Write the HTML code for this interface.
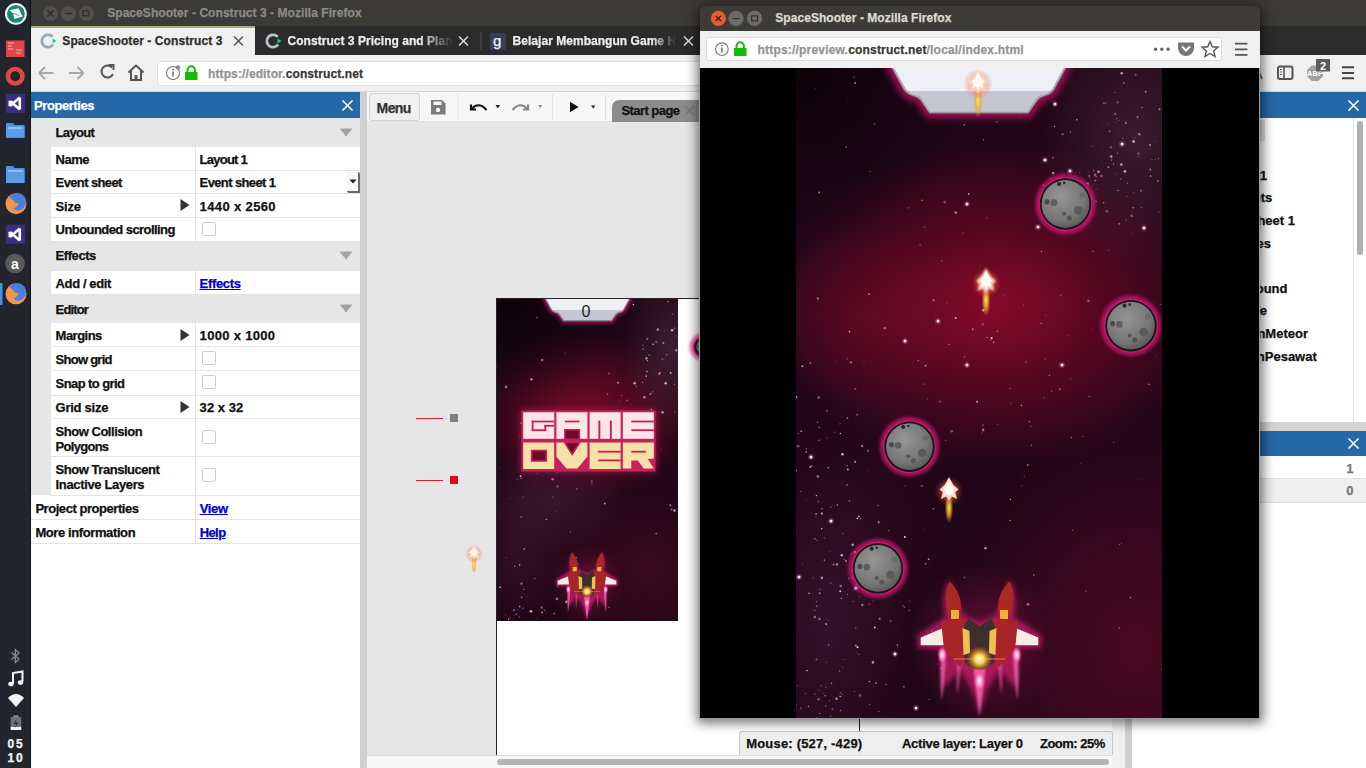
<!DOCTYPE html>
<html><head><meta charset="utf-8">
<style>
*{margin:0;padding:0;box-sizing:border-box}
html,body{width:1366px;height:768px;overflow:hidden;background:#e6e6e6;font-family:"Liberation Sans",sans-serif}
.a{position:absolute}
.t{font-weight:bold;white-space:pre;line-height:normal;-webkit-text-stroke:0.25px currentColor}
</style></head><body>
<div class="a" style="left:0px;top:0px;width:30px;height:768px;background:#22252e;"></div><div class="a" style="left:30px;top:0px;width:1px;height:768px;background:#101114;"></div><svg class="a" style="left:0;top:0" width="31" height="320">
<circle cx="15.9" cy="13.9" r="9.9" fill="#13877a" stroke="#f2f8f8" stroke-width="2"/>
<path d="M9.5 10.3 L18.6 8.3 L22.6 16.5 L14.5 19 L13 13.5 Z" fill="#f4fbfb"/>
<path d="M13 13.3 L19 15.5" stroke="#2a6a60" stroke-width="0.7"/>
<rect x="6" y="40.5" width="18.5" height="16.5" fill="#e04646"/>
<path d="M8 43h6M8 46h4M8 49h5M16 50h6M16 53h5" stroke="#f4b0b0" stroke-width="1"/>
<circle cx="15.2" cy="76.2" r="7.3" fill="none" stroke="#e2493c" stroke-width="4.5"/>
<rect x="6" y="93.8" width="19" height="19" fill="#3a2c88"/>
<path d="M19.8 97.5 V109.5 M19.8 97.5 L10 106 M19.8 109.5 L10 101 M9.8 100.8 V106.2" stroke="#fff" stroke-width="2.6" fill="none" stroke-linejoin="round"/>
<path d="M6 123 h7 l1.5 2 h10 v12.7 h-18.5 z" fill="#4f8ee0"/>
<rect x="6" y="126" width="18.5" height="11.7" fill="#5a9bea"/>
<path d="M8 128h14.5" stroke="#cfe0f7" stroke-width="1"/>
<path d="M6 166 h7 l1.5 2 h10 v15 h-18.5 z" fill="#4f8ee0"/>
<rect x="6" y="169" width="18.5" height="14" fill="#5a9bea"/>
<path d="M8 171h14.5" stroke="#cfe0f7" stroke-width="1"/>
<circle cx="16" cy="203.7" r="10.5" fill="#f0954a"/>
<path d="M9 196.5 Q14 192.5 20 193.5 Q26.5 196 26 203 Q25 209 19 210.5 Q15 211 13.5 208 Q18 207 19 203 Q15 204 13 200 Q11 198 9 196.5 Z" fill="#4a7ee0"/>
<rect x="6" y="224.8" width="19" height="19" fill="#3a2c88"/>
<path d="M19.8 228.5 V240.5 M19.8 228.5 L10 237 M19.8 240.5 L10 232 M9.8 231.8 V237.2" stroke="#fff" stroke-width="2.6" fill="none" stroke-linejoin="round"/>
<circle cx="15" cy="263.5" r="9.8" fill="#5a5a5a"/>
<text x="15" y="268.5" font-family="Liberation Sans" font-weight="bold" font-size="14" fill="#fff" text-anchor="middle">a</text>
<rect x="0" y="283" width="2.5" height="22" fill="#4c8fe8"/>
<circle cx="16" cy="293.8" r="10.5" fill="#f0954a"/>
<path d="M9 286.6 Q14 282.6 20 283.6 Q26.5 286.1 26 293.1 Q25 299.1 19 300.6 Q15 301.1 13.5 298.1 Q18 297.1 19 293.1 Q15 294.1 13 290.1 Q11 288.1 9 286.6 Z" fill="#4a7ee0"/>
</svg><svg class="a" style="left:0;top:640px" width="31" height="128">
<path d="M11.5 12.5 L19 19 L15.3 22.5 L15.3 9.5 L19 13 L11.5 19.5" stroke="#8a8d96" stroke-width="1.3" fill="none"/>
<path d="M13 43.5 V33 L22.5 31.5 V41.5" stroke="#f4f4f4" stroke-width="2" fill="none"/>
<ellipse cx="11" cy="44" rx="2.7" ry="2.3" fill="#f4f4f4"/>
<ellipse cx="20.5" cy="42.5" rx="2.7" ry="2.3" fill="#f4f4f4"/>
<path d="M8 58 Q16 50 24 58 L16 67 Z" fill="#f4f4f4"/>
<rect x="13.5" y="75.5" width="5" height="2" fill="#9a9da5"/>
<rect x="10.7" y="77" width="10.5" height="13" fill="#6f727a"/>
<rect x="10.7" y="87" width="10.5" height="3" fill="#f4f4f4"/>
<path d="M16.5 79 L13.5 84 H16 L15 88 L18.5 82.5 H16 Z" fill="#2a2d35"/>
</svg><div class="a t" style="left:7.60px;top:737.44px;font-size:12px;color:#f4f4f4;letter-spacing:1.841px;">05</div><div class="a t" style="left:7.60px;top:751.14px;font-size:12px;color:#f4f4f4;letter-spacing:1.841px;">10</div><div class="a" style="left:31px;top:0px;width:1335px;height:26px;background:#3b3a36;"></div><div class="a" style="left:31px;top:26px;width:1335px;height:29px;background:#2b2b2b;"></div><div class="a" style="left:31px;top:26px;width:224px;height:2px;background:#9fb27f;"></div><div class="a" style="left:31px;top:28px;width:224px;height:27px;background:#f0f0f0;"></div><div class="a" style="left:31px;top:55px;width:1335px;height:37px;background:#f0f0f0;"></div><div class="a" style="left:31px;top:91px;width:1335px;height:1px;background:#d6d6d6;"></div><div class="a" style="left:42.9px;top:5.8px;width:15px;height:15px;border-radius:50%;background:#514f4a"></div><div class="a" style="left:60.900000000000006px;top:5.8px;width:15px;height:15px;border-radius:50%;background:#514f4a"></div><div class="a" style="left:78.8px;top:5.8px;width:15px;height:15px;border-radius:50%;background:#514f4a"></div><svg class="a" style="left:31px;top:0" width="80" height="26">
<path d="M16.5 10.5 L22.5 16.5 M22.5 10.5 L16.5 16.5" stroke="#2b2a27" stroke-width="1.2"/>
<path d="M34 13.5 H41" stroke="#2b2a27" stroke-width="1.3"/>
<rect x="51.8" y="10.8" width="6" height="5" fill="none" stroke="#2b2a27" stroke-width="1.1"/>
</svg><div class="a t" style="left:107.20px;top:5.94px;font-size:12px;color:#8b8a85;letter-spacing:0.057px;">SpaceShooter - Construct 3 - Mozilla Firefox</div><svg class="a" style="left:31px;top:28px" width="700" height="27">
<circle cx="17" cy="13" r="6.2" fill="none" stroke="#9aa6b0" stroke-width="2.8" stroke-dasharray="30 9" transform="rotate(35 17 13)"/>
<path d="M21.5 10.5 L25.5 13 L21.5 15.5 Z" fill="#2ec4a0"/>
<path d="M203 8.5 L212 17.5 M212 8.5 L203 17.5" stroke="#555" stroke-width="1.5"/>
<circle cx="242" cy="13" r="6.2" fill="none" stroke="#b8c0c8" stroke-width="2.8" stroke-dasharray="30 9" transform="rotate(35 242 13)"/>
<path d="M246.5 10.5 L250.5 13 L246.5 15.5 Z" fill="#2ec4a0"/>
<path d="M428 8.5 L437 17.5 M437 8.5 L428 17.5" stroke="#ddd" stroke-width="1.5"/>
<rect x="449.5" y="4" width="1" height="18" fill="#555"/>
<rect x="459" y="5" width="16" height="17" fill="#34405a"/>
<path d="M653 8.5 L662 17.5 M662 8.5 L653 17.5" stroke="#ddd" stroke-width="1.5"/>
</svg><div class="a t" style="left:62.30px;top:33.84px;font-size:12px;color:#2d2d2d;letter-spacing:0.079px;">SpaceShooter - Construct 3</div><div class="a t" style="left:287.50px;top:33.84px;font-size:12px;color:#ececec;letter-spacing:0.036px;-webkit-mask-image:linear-gradient(90deg,#000 80%,transparent 100%)">Construct 3 Pricing and Plan</div><div class="a t" style="left:493.00px;top:31.92px;font-size:15px;color:#f4f4f4;font-weight:normal;">g</div><div class="a t" style="left:512.60px;top:33.84px;font-size:12px;color:#ececec;letter-spacing:0.034px;-webkit-mask-image:linear-gradient(90deg,#000 85%,transparent 100%)">Belajar Membangun Game H</div><svg class="a" style="left:31px;top:55px" width="130" height="37">
<path d="M8 18 H22.5 M8 18 L14 12 M8 18 L14 24" stroke="#a8a8a8" stroke-width="1.8" fill="none"/>
<path d="M38 18 H52.5 M52.5 18 L46.5 12 M52.5 18 L46.5 24" stroke="#a8a8a8" stroke-width="1.8" fill="none"/>
<path d="M81 12.5 A6 6 0 1 0 82 19" stroke="#555" stroke-width="2" fill="none"/>
<path d="M77.5 10 H82.5 V15" stroke="#555" stroke-width="2" fill="none"/>
<path d="M97.5 17.5 L105 10.5 L112.5 17.5 M100 16 V25 H110 V16" stroke="#555" stroke-width="2" fill="none"/>
<rect x="103.5" y="20" width="3" height="5" fill="#555"/>
</svg><div class="a" style="left:157px;top:60.5px;width:1090px;height:25px;background:#fff;border:1px solid #dedede;border-radius:4px"></div><svg class="a" style="left:157px;top:60px" width="50" height="26">
<circle cx="16" cy="13" r="6.5" fill="none" stroke="#777" stroke-width="1.1"/>
<rect x="15.2" y="11.5" width="1.6" height="5" fill="#777"/><rect x="15.2" y="8.7" width="1.6" height="1.6" fill="#777"/>
<circle cx="21" cy="7.5" r="2.2" fill="#888"/>
<path d="M30.5 12 V10 A3.7 3.7 0 0 1 37.9 10 V12" stroke="#12bc00" stroke-width="2" fill="none"/>
<rect x="28" y="12" width="12.5" height="8" fill="#12bc00"/>
</svg><div class="a t" style="left:208.00px;top:66.84px;font-size:12px;color:#939393;letter-spacing:0.111px;">https://editor.<span style="color:#363636">construct.net</span></div><svg class="a" style="left:1248px;top:64px" width="20" height="18"><path d="M2 15 L8 1.5 L14 15 M4.5 10 H11.5" stroke="#666" stroke-width="1.8" fill="none"/></svg><svg class="a" style="left:1255px;top:55px" width="111" height="37">
<rect x="23" y="11.5" width="14.5" height="12.5" rx="2" fill="none" stroke="#555" stroke-width="2"/>
<path d="M29 11.5 V24" stroke="#555" stroke-width="1.6"/>
<path d="M25 14.5 h2 M25 17 h2 M25 19.5 h2" stroke="#555" stroke-width="1"/>
<path d="M56.8 10.4 h6.4 l4.6 4.6 v6.4 l-4.6 4.6 h-6.4 l-4.6 -4.6 v-6.4 z" fill="#a0a0a0"/>
<text x="60" y="21" font-family="Liberation Sans" font-size="7.5" font-weight="bold" fill="#fff" text-anchor="middle">ABP</text>
<rect x="61" y="4" width="14" height="12.5" fill="#5c5c5c"/>
<text x="68" y="14.5" font-family="Liberation Sans" font-size="11" font-weight="bold" fill="#fff" text-anchor="middle">2</text>
<path d="M87 12.3 h12 M87 18 h12 M87 23.2 h12" stroke="#444" stroke-width="2"/>
</svg><div class="a" style="left:31px;top:92px;width:329px;height:676px;background:#fff;"></div><div class="a" style="left:31px;top:92px;width:329px;height:26px;background:#2568a8;"></div><div class="a t" style="left:34.00px;top:98.23px;font-size:13px;color:#fff;letter-spacing:-0.424px;">Properties</div><svg class="a" style="left:340px;top:98px" width="16" height="16"><path d="M2.5 2.5 L12.5 12.5 M12.5 2.5 L2.5 12.5" stroke="#fff" stroke-width="1.6"/></svg><div class="a" style="left:31px;top:118px;width:20px;height:377px;background:#e6e6e6;"></div><div class="a" style="left:51px;top:118px;width:309px;height:29px;background:#e6e6e6;"></div><div class="a t" style="left:55.60px;top:125.34px;font-size:13px;color:#111;letter-spacing:-0.665px;">Layout</div><svg class="a" style="left:339px;top:128.0px" width="14" height="9"><path d="M0.5 0.5 H13.5 L7 8.5 Z" fill="#a3a3a3"/></svg><div class="a" style="left:51px;top:147px;width:309px;height:23px;background:#fff;"></div><div class="a" style="left:195px;top:147px;width:1px;height:23px;background:#e4e4e4;"></div><div class="a t" style="left:55.60px;top:151.74px;font-size:13px;color:#111;letter-spacing:-0.541px;">Name</div><div class="a t" style="left:199.60px;top:151.74px;font-size:13px;color:#111;letter-spacing:-0.753px;">Layout 1</div><div class="a" style="left:51px;top:170px;width:309px;height:23px;background:#fff;"></div><div class="a" style="left:195px;top:170px;width:1px;height:23px;background:#e4e4e4;"></div><div class="a t" style="left:55.60px;top:175.24px;font-size:13px;color:#111;letter-spacing:-0.618px;">Event sheet</div><div class="a t" style="left:199.60px;top:175.24px;font-size:13px;color:#111;letter-spacing:-0.619px;">Event sheet 1</div><div class="a" style="left:347px;top:172px;width:13px;height:21px;background:#f7f7f7;border-right:2px solid #6a6a6a;border-bottom:2px solid #6a6a6a;border-radius:0 2px 0 2px"></div><svg class="a" style="left:349px;top:179px" width="8" height="5"><path d="M0.5 0.5 H7.5 L4 4.5 Z" fill="#222"/></svg><div class="a" style="left:51px;top:193px;width:309px;height:24px;background:#fff;"></div><div class="a" style="left:195px;top:193px;width:1px;height:24px;background:#e4e4e4;"></div><div class="a t" style="left:55.60px;top:198.63px;font-size:13px;color:#111;letter-spacing:-0.172px;">Size</div><div class="a t" style="left:199.60px;top:198.63px;font-size:13px;color:#111;letter-spacing:0.370px;">1440 x 2560</div><svg class="a" style="left:180px;top:199.3px" width="10" height="12"><path d="M0.5 0 L9.5 6 L0.5 12 Z" fill="#333"/></svg><div class="a" style="left:51px;top:217px;width:309px;height:24px;background:#fff;"></div><div class="a" style="left:195px;top:217px;width:1px;height:24px;background:#e4e4e4;"></div><div class="a t" style="left:55.60px;top:222.03px;font-size:13px;color:#111;letter-spacing:-0.567px;">Unbounded scrolling</div><div class="a" style="left:201.7px;top:221.5px;width:14px;height:14px;border:1px solid #cdcdcd;border-radius:2px;background:#fff"></div><div class="a" style="left:51px;top:240.7px;width:309px;height:29.900000000000034px;background:#e6e6e6;"></div><div class="a t" style="left:55.60px;top:248.33px;font-size:13px;color:#111;letter-spacing:-0.443px;">Effects</div><svg class="a" style="left:339px;top:251.15px" width="14" height="9"><path d="M0.5 0.5 H13.5 L7 8.5 Z" fill="#a3a3a3"/></svg><div class="a" style="left:51px;top:271px;width:309px;height:23px;background:#fff;"></div><div class="a" style="left:195px;top:271px;width:1px;height:23px;background:#e4e4e4;"></div><div class="a t" style="left:55.60px;top:275.74px;font-size:13px;color:#111;letter-spacing:-0.391px;">Add / edit</div><div class="a t" style="left:199.60px;top:275.74px;font-size:13px;color:#0000cc;letter-spacing:-0.343px;text-decoration:underline">Effects</div><div class="a" style="left:51px;top:294.3px;width:309px;height:28.69999999999999px;background:#e6e6e6;"></div><div class="a t" style="left:55.60px;top:301.83px;font-size:13px;color:#111;letter-spacing:-0.853px;">Editor</div><svg class="a" style="left:339px;top:304.15px" width="14" height="9"><path d="M0.5 0.5 H13.5 L7 8.5 Z" fill="#a3a3a3"/></svg><div class="a" style="left:51px;top:323px;width:309px;height:23px;background:#fff;"></div><div class="a" style="left:195px;top:323px;width:1px;height:23px;background:#e4e4e4;"></div><div class="a t" style="left:55.60px;top:327.94px;font-size:13px;color:#111;letter-spacing:-0.524px;">Margins</div><div class="a t" style="left:199.60px;top:327.94px;font-size:13px;color:#111;letter-spacing:0.320px;">1000 x 1000</div><svg class="a" style="left:180px;top:328.7px" width="10" height="12"><path d="M0.5 0 L9.5 6 L0.5 12 Z" fill="#333"/></svg><div class="a" style="left:51px;top:346px;width:309px;height:24px;background:#fff;"></div><div class="a" style="left:195px;top:346px;width:1px;height:24px;background:#e4e4e4;"></div><div class="a t" style="left:55.60px;top:352.24px;font-size:13px;color:#111;letter-spacing:-0.743px;">Show grid</div><div class="a" style="left:201.7px;top:350.9px;width:14px;height:14px;border:1px solid #cdcdcd;border-radius:2px;background:#fff"></div><div class="a" style="left:51px;top:370px;width:309px;height:25px;background:#fff;"></div><div class="a" style="left:195px;top:370px;width:1px;height:25px;background:#e4e4e4;"></div><div class="a t" style="left:55.60px;top:376.44px;font-size:13px;color:#111;letter-spacing:-0.586px;">Snap to grid</div><div class="a" style="left:201.7px;top:375.1px;width:14px;height:14px;border:1px solid #cdcdcd;border-radius:2px;background:#fff"></div><div class="a" style="left:51px;top:395px;width:309px;height:23px;background:#fff;"></div><div class="a" style="left:195px;top:395px;width:1px;height:23px;background:#e4e4e4;"></div><div class="a t" style="left:55.60px;top:399.94px;font-size:13px;color:#111;letter-spacing:-0.265px;">Grid size</div><div class="a t" style="left:199.60px;top:399.94px;font-size:13px;color:#111;letter-spacing:0.054px;">32 x 32</div><svg class="a" style="left:180px;top:400.65px" width="10" height="12"><path d="M0.5 0 L9.5 6 L0.5 12 Z" fill="#333"/></svg><div class="a" style="left:51px;top:418px;width:309px;height:38px;background:#fff;"></div><div class="a" style="left:195px;top:418px;width:1px;height:38px;background:#e4e4e4;"></div><div class="a t" style="left:55.60px;top:423.74px;font-size:13px;color:#111;letter-spacing:-0.475px;">Show Collision</div><div class="a t" style="left:55.60px;top:438.94px;font-size:13px;color:#111;letter-spacing:-0.717px;">Polygons</div><div class="a" style="left:201.7px;top:429.5px;width:14px;height:14px;border:1px solid #cdcdcd;border-radius:2px;background:#fff"></div><div class="a" style="left:51px;top:456px;width:309px;height:39px;background:#fff;"></div><div class="a" style="left:195px;top:456px;width:1px;height:39px;background:#e4e4e4;"></div><div class="a t" style="left:55.60px;top:461.63px;font-size:13px;color:#111;letter-spacing:-0.463px;">Show Translucent</div><div class="a t" style="left:55.60px;top:476.94px;font-size:13px;color:#111;letter-spacing:-0.354px;">Inactive Layers</div><div class="a" style="left:201.7px;top:468px;width:14px;height:14px;border:1px solid #cdcdcd;border-radius:2px;background:#fff"></div><div class="a" style="left:31px;top:495px;width:329px;height:24px;background:#fff;"></div><div class="a" style="left:195px;top:495px;width:1px;height:24px;background:#e4e4e4;"></div><div class="a t" style="left:35.40px;top:500.54px;font-size:13px;color:#111;letter-spacing:-0.451px;">Project properties</div><div class="a t" style="left:199.70px;top:500.54px;font-size:13px;color:#0000cc;letter-spacing:-0.330px;text-decoration:underline">View</div><div class="a" style="left:31px;top:519px;width:329px;height:24px;background:#fff;"></div><div class="a" style="left:195px;top:519px;width:1px;height:24px;background:#e4e4e4;"></div><div class="a t" style="left:35.40px;top:524.94px;font-size:13px;color:#111;letter-spacing:-0.398px;">More information</div><div class="a t" style="left:199.70px;top:524.94px;font-size:13px;color:#0000cc;letter-spacing:-0.591px;text-decoration:underline">Help</div><div class="a" style="left:51px;top:170px;width:309px;height:1px;background:#e4e4e4;"></div><div class="a" style="left:51px;top:193px;width:309px;height:1px;background:#e4e4e4;"></div><div class="a" style="left:51px;top:217px;width:309px;height:1px;background:#e4e4e4;"></div><div class="a" style="left:51px;top:241px;width:309px;height:1px;background:#e4e4e4;"></div><div class="a" style="left:51px;top:294px;width:309px;height:1px;background:#e4e4e4;"></div><div class="a" style="left:51px;top:346px;width:309px;height:1px;background:#e4e4e4;"></div><div class="a" style="left:51px;top:370px;width:309px;height:1px;background:#e4e4e4;"></div><div class="a" style="left:51px;top:395px;width:309px;height:1px;background:#e4e4e4;"></div><div class="a" style="left:51px;top:418px;width:309px;height:1px;background:#e4e4e4;"></div><div class="a" style="left:51px;top:456px;width:309px;height:1px;background:#e4e4e4;"></div><div class="a" style="left:51px;top:495px;width:309px;height:1px;background:#e4e4e4;"></div><div class="a" style="left:31px;top:519px;width:329px;height:1px;background:#e4e4e4;"></div><div class="a" style="left:31px;top:543px;width:329px;height:1px;background:#e4e4e4;"></div><div class="a" style="left:360px;top:92px;width:7px;height:676px;background:#cfcfcf;"></div><div class="a" style="left:367px;top:92px;width:758px;height:676px;background:#e6e6e6;"></div><div class="a" style="left:367px;top:92px;width:758px;height:30px;background:#f6f6f6;"></div><div class="a" style="left:367px;top:121px;width:758px;height:1px;background:#e0e0e0;"></div><div class="a" style="left:368.5px;top:93.3px;width:51px;height:27.5px;background:#f0f0f0;border:1px solid #d4d4d4;border-radius:3px"></div><div class="a t" style="left:376.60px;top:99.63px;font-size:14px;color:#333;letter-spacing:-0.621px;">Menu</div><svg class="a" style="left:367px;top:92px" width="260" height="30">
<path d="M64 8 H75 L78.5 11.5 V22.5 H64 Z" fill="#7a7a7a"/>
<rect x="66.5" y="9.5" width="8" height="3.5" fill="#f6f6f6"/>
<circle cx="71" cy="18" r="2.2" fill="#f6f6f6"/>
<rect x="90.5" y="2" width="1" height="26" fill="#e2e2e2"/>
<path d="M104 12.5 V17.5 H109" stroke="#111" stroke-width="2.2" fill="none"/>
<path d="M104.5 17 Q112 9 119.5 18" stroke="#111" stroke-width="2.2" fill="none"/>
<path d="M128.5 13 H133 L130.75 16.5 Z" fill="#222"/>
<path d="M161 12.5 V17.5 H156" stroke="#888" stroke-width="2.2" fill="none"/>
<path d="M160.5 17 Q153 9 145.5 18" stroke="#888" stroke-width="2.2" fill="none"/>
<path d="M171 13 H175.5 L173.25 16.5 Z" fill="#999"/>
<rect x="185" y="2" width="1" height="26" fill="#e2e2e2"/>
<path d="M203 9.7 L211.6 15 L203 20.3 Z" fill="#111"/>
<path d="M224 13.4 H228.4 L226.2 16.5 Z" fill="#222"/>
<rect x="238" y="2" width="1" height="26" fill="#e2e2e2"/>
</svg><div class="a" style="left:612px;top:99.8px;width:95px;height:22px;background:#8c8c8c;border-radius:7px 7px 0 0"></div><div class="a t" style="left:621.50px;top:103.03px;font-size:13px;color:#111;letter-spacing:-0.564px;">Start page</div><svg class="a" style="left:684px;top:105px" width="12" height="12"><path d="M1 1 L10 10 M10 1 L1 10" stroke="#777" stroke-width="1.5"/></svg><div class="a" style="left:496px;top:298px;width:680px;height:457px;background:#fff;"></div><div class="a" style="left:496px;top:298px;width:680px;height:1px;background:#222;"></div><div class="a" style="left:496px;top:298px;width:1px;height:457px;background:#222;"></div><div class="a" style="left:367px;top:755px;width:758px;height:13px;background:#f7f7f7;"></div><div class="a" style="left:367px;top:755px;width:758px;height:1px;background:#dadada;"></div><div class="a" style="left:497px;top:759px;width:612px;height:6px;background:#b4b4b4;border-radius:3px"></div><div class="a" style="left:1112px;top:122px;width:13px;height:646px;background:#f0f0f0;"></div><div class="a" style="left:1125px;top:92px;width:7px;height:676px;background:#cfcfcf;"></div><div class="a" style="left:416px;top:418px;width:27px;height:1px;background:#d22;"></div><div class="a" style="left:450px;top:414px;width:8px;height:8px;background:#808080;"></div><div class="a" style="left:416px;top:480px;width:27px;height:1px;background:#d22;"></div><div class="a" style="left:450px;top:476px;width:8px;height:8px;background:#e01010;"></div><div class="a" style="left:859px;top:718px;width:1px;height:37px;background:#222;"></div><div class="a" style="left:738.5px;top:731px;width:374px;height:24px;background:rgba(237,237,237,0.93);border:1px solid #c9c9c9;border-bottom:none;border-radius:3px 3px 0 0"></div><div class="a t" style="left:746.20px;top:735.84px;font-size:13px;color:#111;letter-spacing:0.194px;">Mouse: (527, -429)</div><div class="a t" style="left:902.00px;top:735.84px;font-size:13px;color:#111;letter-spacing:-0.273px;">Active layer: Layer 0</div><div class="a t" style="left:1040.00px;top:735.84px;font-size:13px;color:#111;letter-spacing:-0.505px;">Zoom: 25%</div><div class="a" style="left:1132px;top:92px;width:234px;height:676px;background:#fff;"></div><div class="a" style="left:1132px;top:92px;width:234px;height:26px;background:#2568a8;"></div><svg class="a" style="left:1346px;top:98px" width="16" height="16"><path d="M2.5 2.5 L12.5 12.5 M12.5 2.5 L2.5 12.5" stroke="#fff" stroke-width="1.6"/></svg><div class="a" style="left:1353px;top:118px;width:1px;height:304px;background:#e2e2e2;"></div><div class="a" style="left:1255px;top:120px;width:10px;height:21px;background:#e4e4e4;"></div><div class="a" style="left:1356.6px;top:120.7px;width:6.3px;height:134px;background:#b0b0b0;border-radius:3px"></div><div class="a t" style="left:1213.53px;top:167.63px;font-size:13px;color:#111;">Layout 1</div><div class="a t" style="left:1192.00px;top:190.24px;font-size:13px;color:#111;">Event sheets</div><div class="a t" style="left:1211.17px;top:212.54px;font-size:13px;color:#111;">Event sheet 1</div><div class="a t" style="left:1192.97px;top:236.04px;font-size:13px;color:#111;">Object types</div><div class="a t" style="left:1211.66px;top:281.24px;font-size:13px;color:#111;">Background</div><div class="a t" style="left:1230.16px;top:303.24px;font-size:13px;color:#111;">Sprite</div><div class="a t" style="left:1223.48px;top:326.13px;font-size:13px;color:#111;">SpawnMeteor</div><div class="a t" style="left:1222.86px;top:348.94px;font-size:13px;color:#111;">SpawnPesawat</div><div class="a" style="left:1132px;top:422px;width:234px;height:9px;background:#d4d4d4;"></div><div class="a" style="left:1132px;top:431px;width:234px;height:25px;background:#2568a8;"></div><svg class="a" style="left:1346px;top:436px" width="16" height="16"><path d="M2.5 2.5 L12.5 12.5 M12.5 2.5 L2.5 12.5" stroke="#fff" stroke-width="1.6"/></svg><div class="a" style="left:1132px;top:479px;width:234px;height:24px;background:#efefef;"></div><div class="a" style="left:1132px;top:478px;width:234px;height:1px;background:#e0e0e0;"></div><div class="a" style="left:1132px;top:502px;width:234px;height:1px;background:#e0e0e0;"></div><div class="a t" style="left:1346.27px;top:461.24px;font-size:13px;color:#777;">1</div><div class="a t" style="left:1346.27px;top:482.74px;font-size:13px;color:#777;">0</div><svg class="a" style="left:497px;top:299px" width="181" height="322"><defs><radialGradient id="erock" cx="40%" cy="35%" r="70%"><stop offset="0" stop-color="#959595"/><stop offset="0.7" stop-color="#767676"/><stop offset="1" stop-color="#565656"/></radialGradient><radialGradient id="eaglow"><stop offset="0.78" stop-color="#ff2a9a" stop-opacity="0.8"/><stop offset="1" stop-color="#ff2a9a" stop-opacity="0"/></radialGradient><radialGradient id="ebtail"><stop offset="0" stop-color="#f4f050"/><stop offset="0.5" stop-color="#f0b030" stop-opacity="0.75"/><stop offset="1" stop-color="#e08020" stop-opacity="0"/></radialGradient><radialGradient id="ebglow"><stop offset="0" stop-color="#ffa070" stop-opacity="0.9"/><stop offset="1" stop-color="#ff4030" stop-opacity="0"/></radialGradient><radialGradient id="eshipglow"><stop offset="0" stop-color="#ff2a8a" stop-opacity="0.3"/><stop offset="0.6" stop-color="#ff2a8a" stop-opacity="0.1"/><stop offset="1" stop-color="#ff2a8a" stop-opacity="0"/></radialGradient><radialGradient id="epinkglow"><stop offset="0" stop-color="#fff"/><stop offset="0.45" stop-color="#ff90c8"/><stop offset="1" stop-color="#ff2a8a" stop-opacity="0"/></radialGradient><radialGradient id="ecoreglow"><stop offset="0" stop-color="#ffffe8"/><stop offset="0.35" stop-color="#ffd848"/><stop offset="1" stop-color="#ff6020" stop-opacity="0"/></radialGradient><linearGradient id="ehudtop" x1="0" y1="0" x2="0" y2="1"><stop offset="0" stop-color="#eef0f6"/><stop offset="0.545" stop-color="#eef0f6"/><stop offset="0.545" stop-color="#c4c7d1"/><stop offset="1" stop-color="#c4c7d1"/></linearGradient><radialGradient id="eneb0" gradientUnits="userSpaceOnUse" cx="150" cy="270" r="130" gradientTransform="translate(150 270) scale(1 0.8461538461538461) translate(-150 -270)"><stop offset="0" stop-color="#4a0a22" stop-opacity="0.6"/><stop offset="0.55" stop-color="#4a0a22" stop-opacity="0.27"/><stop offset="1" stop-color="#4a0a22" stop-opacity="0"/></radialGradient><radialGradient id="eneb1" gradientUnits="userSpaceOnUse" cx="88" cy="118" r="115" gradientTransform="translate(88 118) scale(1 0.7391304347826086) translate(-88 -118)"><stop offset="0" stop-color="#9a0c32" stop-opacity="0.75"/><stop offset="0.55" stop-color="#9a0c32" stop-opacity="0.3375"/><stop offset="1" stop-color="#9a0c32" stop-opacity="0"/></radialGradient><radialGradient id="eneb2" gradientUnits="userSpaceOnUse" cx="175" cy="50" r="50" gradientTransform="translate(175 50) scale(1 1.8) translate(-175 -50)"><stop offset="0" stop-color="#705060" stop-opacity="0.35"/><stop offset="0.55" stop-color="#705060" stop-opacity="0.1575"/><stop offset="1" stop-color="#705060" stop-opacity="0"/></radialGradient><radialGradient id="eneb3" gradientUnits="userSpaceOnUse" cx="20" cy="250" r="50" gradientTransform="translate(20 250) scale(1 1.6) translate(-20 -250)"><stop offset="0" stop-color="#5a2048" stop-opacity="0.35"/><stop offset="0.55" stop-color="#5a2048" stop-opacity="0.1575"/><stop offset="1" stop-color="#5a2048" stop-opacity="0"/></radialGradient><radialGradient id="eneb4" gradientUnits="userSpaceOnUse" cx="55" cy="200" r="70" gradientTransform="translate(55 200) scale(1 0.7857142857142857) translate(-55 -200)"><stop offset="0" stop-color="#6a3060" stop-opacity="0.35"/><stop offset="0.55" stop-color="#6a3060" stop-opacity="0.1575"/><stop offset="1" stop-color="#6a3060" stop-opacity="0"/></radialGradient><radialGradient id="eneb5" gradientUnits="userSpaceOnUse" cx="0" cy="0" r="130" gradientTransform="translate(0 0) scale(1 0.8461538461538461) translate(0 0)"><stop offset="0" stop-color="#060103" stop-opacity="0.7"/><stop offset="0.55" stop-color="#060103" stop-opacity="0.315"/><stop offset="1" stop-color="#060103" stop-opacity="0"/></radialGradient></defs><rect width="181" height="322" fill="#1e0614"/><rect width="181" height="322" fill="url(#eneb0)"/><rect width="181" height="322" fill="url(#eneb1)"/><rect width="181" height="322" fill="url(#eneb2)"/><rect width="181" height="322" fill="url(#eneb3)"/><rect width="181" height="322" fill="url(#eneb4)"/><rect width="181" height="322" fill="url(#eneb5)"/><circle cx="72.5" cy="296.4" r="0.8" fill="#ff80d0" opacity="0.58"/><circle cx="55.7" cy="180.3" r="1.3" fill="#ff80d0" opacity="0.65"/><circle cx="174.6" cy="210.6" r="1.0" fill="#ff80d0" opacity="0.66"/><circle cx="47.5" cy="311.0" r="0.6" fill="#ffd0f0" opacity="0.63"/><circle cx="59.9" cy="299.9" r="1.3" fill="#ffffff" opacity="0.46"/><circle cx="42.7" cy="148.9" r="1.0" fill="#ffffff" opacity="0.85"/><circle cx="21.2" cy="180.1" r="0.5" fill="#ffffff" opacity="0.34"/><circle cx="0.1" cy="67.5" r="0.5" fill="#ff80d0" opacity="0.56"/><circle cx="160.9" cy="30.6" r="1.3" fill="#ffffff" opacity="0.45"/><circle cx="149.2" cy="77.1" r="0.8" fill="#ffffff" opacity="0.74"/><circle cx="137.7" cy="84.2" r="1.3" fill="#ffd0f0" opacity="0.72"/><circle cx="134.0" cy="105.2" r="0.5" fill="#ff80d0" opacity="0.45"/><circle cx="173.7" cy="74.0" r="1.0" fill="#ffffff" opacity="0.65"/><circle cx="153.5" cy="95.0" r="1.0" fill="#ffd0f0" opacity="0.48"/><circle cx="11.6" cy="320.2" r="0.6" fill="#ffd0f0" opacity="0.83"/><circle cx="24.6" cy="124.3" r="1.3" fill="#ffffff" opacity="0.38"/><circle cx="45.2" cy="61.1" r="1.3" fill="#ff80d0" opacity="0.65"/><circle cx="90.1" cy="147.1" r="0.8" fill="#ffffff" opacity="0.33"/><circle cx="22.3" cy="317.9" r="0.7" fill="#ff80d0" opacity="0.53"/><circle cx="121.1" cy="83.8" r="1.0" fill="#ffd0f0" opacity="0.64"/><circle cx="150.0" cy="72.4" r="0.8" fill="#ffffff" opacity="0.55"/><circle cx="2.3" cy="287.8" r="0.6" fill="#ffffff" opacity="0.35"/><circle cx="177.5" cy="211.5" r="1.3" fill="#ffffff" opacity="0.59"/><circle cx="156.1" cy="45.2" r="0.7" fill="#ffffff" opacity="0.83"/><circle cx="145.9" cy="46.3" r="0.7" fill="#ffffff" opacity="0.38"/><circle cx="33.9" cy="312.2" r="1.3" fill="#ffffff" opacity="0.71"/><circle cx="165.6" cy="113.3" r="1.3" fill="#ffffff" opacity="0.56"/><circle cx="75.5" cy="254.6" r="0.8" fill="#ff80d0" opacity="0.62"/><circle cx="24.3" cy="153.0" r="0.5" fill="#ffffff" opacity="0.35"/><circle cx="159.2" cy="234.5" r="0.8" fill="#ff80d0" opacity="0.81"/><circle cx="23.6" cy="177.3" r="1.0" fill="#ffffff" opacity="0.71"/><circle cx="159.2" cy="43.0" r="1.3" fill="#ff80d0" opacity="0.36"/><circle cx="59.8" cy="173.8" r="0.7" fill="#ff80d0" opacity="0.38"/><circle cx="150.4" cy="61.7" r="0.8" fill="#ffffff" opacity="0.57"/><circle cx="26.8" cy="290.3" r="0.6" fill="#ffd0f0" opacity="0.78"/><circle cx="22.7" cy="266.0" r="0.7" fill="#ffffff" opacity="0.76"/><circle cx="24.3" cy="218.0" r="0.8" fill="#ffffff" opacity="0.45"/><circle cx="69.2" cy="167.4" r="1.3" fill="#ff80d0" opacity="0.47"/><circle cx="175.7" cy="15.1" r="1.0" fill="#ff80d0" opacity="0.32"/><circle cx="139.3" cy="87.3" r="0.7" fill="#ffffff" opacity="0.43"/><circle cx="178.1" cy="37.1" r="0.5" fill="#ff80d0" opacity="0.65"/><circle cx="49.3" cy="220.4" r="0.6" fill="#ffd0f0" opacity="0.75"/><circle cx="147.4" cy="98.2" r="1.3" fill="#ff80d0" opacity="0.82"/><circle cx="122.2" cy="102.0" r="0.6" fill="#ff80d0" opacity="0.35"/><circle cx="19.7" cy="180.1" r="0.5" fill="#ff80d0" opacity="0.51"/><circle cx="60.9" cy="287.0" r="0.8" fill="#ffffff" opacity="0.48"/><circle cx="177.4" cy="113.1" r="0.5" fill="#ff80d0" opacity="0.84"/><circle cx="168.7" cy="84.3" r="1.3" fill="#ffd0f0" opacity="0.77"/><circle cx="152.3" cy="56.1" r="0.7" fill="#ffffff" opacity="0.57"/><circle cx="166.4" cy="44.0" r="1.0" fill="#ffffff" opacity="0.48"/><circle cx="69.4" cy="302.9" r="1.3" fill="#ffd0f0" opacity="0.68"/><circle cx="170.8" cy="2.4" r="1.0" fill="#ff80d0" opacity="0.46"/><circle cx="111.9" cy="74.5" r="1.0" fill="#ff80d0" opacity="0.44"/><circle cx="94.9" cy="184.5" r="0.6" fill="#ffffff" opacity="0.53"/><circle cx="13.3" cy="318.7" r="0.5" fill="#ffd0f0" opacity="0.58"/><circle cx="49.6" cy="313.1" r="0.6" fill="#ff80d0" opacity="0.34"/><circle cx="55.9" cy="198.1" r="0.6" fill="#ffd0f0" opacity="0.49"/><circle cx="177.5" cy="85.3" r="0.7" fill="#ffffff" opacity="0.37"/><circle cx="154.3" cy="110.2" r="0.7" fill="#ffffff" opacity="0.70"/><circle cx="150.2" cy="40.1" r="1.0" fill="#ff80d0" opacity="0.64"/><circle cx="44.7" cy="308.5" r="1.3" fill="#ff80d0" opacity="0.53"/><circle cx="153.6" cy="112.7" r="0.7" fill="#ffd0f0" opacity="0.80"/><circle cx="164.2" cy="150.2" r="0.5" fill="#ffffff" opacity="0.37"/><circle cx="169.6" cy="55.8" r="0.8" fill="#ff80d0" opacity="0.60"/><circle cx="22.7" cy="137.8" r="0.5" fill="#ff80d0" opacity="0.41"/><circle cx="37.8" cy="279.4" r="0.7" fill="#ff80d0" opacity="0.58"/><circle cx="145.3" cy="155.2" r="0.5" fill="#ff80d0" opacity="0.32"/><circle cx="20.7" cy="310.8" r="0.5" fill="#ffffff" opacity="0.41"/><circle cx="167.8" cy="30.7" r="0.5" fill="#ff80d0" opacity="0.37"/><circle cx="162.2" cy="74.8" r="1.0" fill="#ffffff" opacity="0.50"/><circle cx="167.1" cy="32.5" r="0.6" fill="#ffd0f0" opacity="0.40"/><circle cx="9.1" cy="258.5" r="0.6" fill="#ffffff" opacity="0.35"/><circle cx="113.9" cy="130.3" r="1.0" fill="#ff80d0" opacity="0.41"/><circle cx="145.7" cy="83.2" r="0.5" fill="#ffffff" opacity="0.71"/><circle cx="73.4" cy="288.7" r="1.0" fill="#ffd0f0" opacity="0.68"/><circle cx="73.4" cy="232.7" r="0.5" fill="#ffd0f0" opacity="0.74"/><circle cx="9.0" cy="87.9" r="1.3" fill="#ffffff" opacity="0.46"/><circle cx="45.0" cy="313.6" r="1.0" fill="#ff80d0" opacity="0.85"/><circle cx="57.2" cy="314.6" r="0.8" fill="#ffffff" opacity="0.52"/><circle cx="117.3" cy="3.5" r="0.7" fill="#ffd0f0" opacity="0.44"/><circle cx="8.6" cy="316.1" r="0.5" fill="#ff80d0" opacity="0.65"/><circle cx="3.3" cy="288.3" r="0.8" fill="#ffffff" opacity="0.81"/><circle cx="165.4" cy="60.3" r="1.0" fill="#ffd0f0" opacity="0.33"/><circle cx="19.1" cy="315.2" r="1.0" fill="#ff80d0" opacity="0.46"/><circle cx="2.9" cy="168.9" r="0.5" fill="#ffffff" opacity="0.31"/><circle cx="124.5" cy="96.5" r="0.5" fill="#ff80d0" opacity="0.79"/><circle cx="112.0" cy="308.3" r="0.5" fill="#ffffff" opacity="0.74"/><circle cx="59.7" cy="212.0" r="0.5" fill="#ff80d0" opacity="0.59"/><circle cx="26.1" cy="309.1" r="0.6" fill="#ffffff" opacity="0.63"/><circle cx="40.5" cy="174.6" r="0.5" fill="#ffffff" opacity="0.50"/><circle cx="79.9" cy="190.0" r="1.0" fill="#ff80d0" opacity="0.44"/><circle cx="24.3" cy="179.4" r="0.6" fill="#ff80d0" opacity="0.82"/><circle cx="107.8" cy="204.6" r="1.0" fill="#ffd0f0" opacity="0.64"/><circle cx="24.6" cy="298.2" r="1.0" fill="#ffd0f0" opacity="0.40"/><circle cx="34.4" cy="80.2" r="1.3" fill="#ff80d0" opacity="0.80"/><circle cx="177.6" cy="29.2" r="0.6" fill="#ffd0f0" opacity="0.65"/><circle cx="24.5" cy="284.5" r="1.3" fill="#ffffff" opacity="0.37"/><circle cx="81.0" cy="264.7" r="0.6" fill="#ff80d0" opacity="0.54"/><circle cx="130.2" cy="101.4" r="1.0" fill="#ff80d0" opacity="0.48"/><circle cx="149.5" cy="59.2" r="1.3" fill="#ffffff" opacity="0.50"/><circle cx="27.3" cy="249.9" r="1.0" fill="#ff80d0" opacity="0.61"/><circle cx="179.2" cy="51.2" r="1.3" fill="#ff80d0" opacity="0.63"/><circle cx="17.7" cy="267.2" r="0.7" fill="#ffd0f0" opacity="0.66"/><circle cx="162.9" cy="73.9" r="1.0" fill="#ff80d0" opacity="0.81"/><circle cx="79.3" cy="258.6" r="0.7" fill="#ffffff" opacity="0.55"/><circle cx="40.3" cy="319.5" r="0.7" fill="#ff80d0" opacity="0.31"/><circle cx="74.1" cy="130.7" r="0.7" fill="#ff80d0" opacity="0.74"/><circle cx="22.7" cy="307.6" r="0.8" fill="#ffd0f0" opacity="0.78"/><circle cx="40.0" cy="18.6" r="0.6" fill="#ffffff" opacity="0.61"/><circle cx="94.7" cy="182.3" r="1.0" fill="#ffffff" opacity="0.35"/><circle cx="175.1" cy="31.3" r="1.3" fill="#ffffff" opacity="0.66"/><circle cx="60.6" cy="187.6" r="1.0" fill="#ffd0f0" opacity="0.49"/><circle cx="26.3" cy="197.9" r="0.6" fill="#ff80d0" opacity="0.57"/><circle cx="13.1" cy="199.0" r="0.5" fill="#ff80d0" opacity="0.53"/><circle cx="173.4" cy="206.2" r="1.0" fill="#ffffff" opacity="0.50"/><circle cx="76.3" cy="135.4" r="0.6" fill="#ffffff" opacity="0.44"/><circle cx="68.0" cy="54.0" r="0.6" fill="#ff80d0" opacity="0.51"/><circle cx="146.1" cy="50.1" r="0.7" fill="#ffffff" opacity="0.66"/><circle cx="136.3" cy="5.5" r="0.8" fill="#ffffff" opacity="0.80"/><circle cx="155.6" cy="92.8" r="0.6" fill="#ffd0f0" opacity="0.63"/><circle cx="110.4" cy="95.1" r="0.8" fill="#ffd0f0" opacity="0.39"/><circle cx="16.9" cy="311.0" r="0.8" fill="#ffd0f0" opacity="0.80"/><circle cx="159.5" cy="42.7" r="0.5" fill="#ffffff" opacity="0.42"/><circle cx="69.7" cy="169.9" r="1.0" fill="#ffffff" opacity="0.73"/><g transform="translate(1.27,-0.02) scale(0.488)"><path d="M95.7 -2 L270 -2 L257 22 Q253 26.5 248 27.5 Q243 28.5 240 33 L232 44.5 L133.8 44.5 L126 33 Q123 28.5 118 27.5 Q113 26.5 109 22 Z" fill="none" stroke="#c0106a" stroke-width="12" stroke-linejoin="round" opacity="0.7" style="filter:blur(3px)"/><path d="M95.7 -2 L270 -2 L257 22 Q253 26.5 248 27.5 Q243 28.5 240 33 L232 44.5 L133.8 44.5 L126 33 Q123 28.5 118 27.5 Q113 26.5 109 22 Z" fill="url(#ehudtop)" stroke="#8a8a8a" stroke-width="2.6"/></g><text x="89" y="18" font-family="Liberation Sans" font-size="16" fill="#222" text-anchor="middle">0</text><rect x="22" y="109.5" width="139" height="65" rx="5" fill="#d8256a" opacity="0.35" style="filter:blur(2.5px)"/><rect x="24.5" y="111.5" width="134" height="61" fill="#c8205c"/><rect x="26.2" y="113.3" width="31" height="26.5" fill="#ffe6e6"/><rect x="34.7" y="121.6" width="22.5" height="1.8" fill="#c8205c"/><rect x="34.7" y="121.6" width="1.8" height="10.5" fill="#c8205c"/><rect x="34.7" y="130.3" width="14.5" height="1.8" fill="#c8205c"/><rect x="47.4" y="125.89999999999999" width="1.8" height="6.2" fill="#c8205c"/><rect x="47.4" y="125.89999999999999" width="9.8" height="1.8" fill="#c8205c"/><rect x="59.400000000000006" y="113.3" width="31" height="26.5" fill="#ffe6e6"/><rect x="67.9" y="121.6" width="14.5" height="1.8" fill="#c8205c"/><rect x="67.9" y="130.8" width="14.5" height="9.5" fill="#6a0a30" stroke="#c8205c" stroke-width="1.6"/><rect x="92.60000000000001" y="113.3" width="31" height="26.5" fill="#ffe6e6"/><rect x="101.4" y="121.6" width="1.9" height="18.7" fill="#c8205c"/><rect x="112.9" y="121.6" width="1.9" height="18.7" fill="#c8205c"/><rect x="125.80000000000001" y="113.3" width="31" height="26.5" fill="#ffe6e6"/><rect x="134.3" y="121.6" width="22.5" height="1.8" fill="#c8205c"/><rect x="134.3" y="130.3" width="22.5" height="1.8" fill="#c8205c"/><rect x="26.2" y="143.5" width="31" height="26.5" fill="#f6e2a6"/><rect x="34.7" y="151.5" width="14.5" height="10.5" fill="#6a0a30" stroke="#c8205c" stroke-width="1.6"/><path d="M59.400000000000006 143.5 H90.4 V157.5 L80.4 169.5 H69.4 L59.400000000000006 157.5 Z" fill="#f6e2a6"/><path d="M67.7 143.5 H82.7 L75.2 155.5 Z" fill="#6a0a30" stroke="#c8205c" stroke-width="1.6"/><rect x="92.60000000000001" y="143.5" width="31" height="26.5" fill="#f6e2a6"/><rect x="101.10000000000001" y="151.8" width="22.5" height="1.8" fill="#c8205c"/><rect x="101.10000000000001" y="160.5" width="22.5" height="1.8" fill="#c8205c"/><path d="M125.80000000000001 143.5 H156.8 V159.5 L150.8 160.0 L156.8 169.5 H146.8 L140.8 161.5 H134.3 V169.5 H125.80000000000001 Z" fill="#f6e2a6"/><rect x="134.3" y="151.8" width="14.5" height="1.8" fill="#c8205c"/><g transform="translate(90,292.5) scale(0.5)">
<ellipse cx="0" cy="-15" rx="72" ry="80" fill="url(#eshipglow)"/>
<g fill="#e8207a" opacity="0.6" style="filter:blur(2.5px)">
<path d="M-30 -80 Q-40 -62 -34 -42 L-40 -38 L-62 -24 L-62 -11 L-40 -10 L-36 30 L-20 10 L-8 30 L0 55 L8 30 L20 10 L36 30 L40 -10 L62 -11 L62 -24 L40 -38 L34 -42 Q40 -62 30 -80 L16 -44 L0 -36 L-16 -44 Z"/>
</g>
<g style="filter:blur(1.2px)">
<path d="M-38 -10 Q-40 12 -38 42 Q-33 12 -34 -10Z M38 -10 Q40 12 38 42 Q33 12 34 -10Z" fill="#ff70c0" opacity="0.7"/>
<path d="M-6 10 Q-3 35 0 58 Q3 35 6 10Z" fill="#ff70c0" opacity="0.75"/>
<path d="M-22 0 Q-24 20 -22 35 Q-19 20 -18 0Z M22 0 Q24 20 22 35 Q19 20 18 0Z" fill="#ff50a8" opacity="0.6"/>
</g>
<path d="M-29.5 -77.3 Q-37 -66 -31.5 -44 L-19.7 -44 Q-15 -62 -29.5 -77.3 Z" fill="#a82a26"/>
<path d="M29.5 -77.3 Q37 -66 31.5 -44 L19.7 -44 Q15 -62 29.5 -77.3 Z" fill="#a82a26"/>
<rect x="-28.5" y="-49" width="8" height="9" fill="#f0b030"/>
<rect x="20.5" y="-49" width="8" height="9" fill="#f0b030"/>
<path d="M-58.8 -21.6 L-37.3 -30.4 L-35.3 -13.8 L-58.8 -13.8 Z" fill="#f8ece8"/>
<path d="M58.8 -21.6 L37.3 -30.4 L35.3 -13.8 L58.8 -13.8 Z" fill="#f8ece8"/>
<path d="M-38.3 -38 L-15.8 -41 L-13 -24 L-18.7 8.6 L-35.5 -9 Z" fill="#a82426"/>
<path d="M38.3 -38 L15.8 -41 L13 -24 L18.7 8.6 L35.5 -9 Z" fill="#a82426"/>
<path d="M-11 -41 L0 -32.4 L11.5 -41 L16.7 -30 L14.8 3 Q8 10.6 0 10.6 Q-8 10.6 -14.8 3 L-16.7 -30 Z" fill="#3e2e2c"/>
<path d="M-17 -31 L-10 -28 L-9.5 -6 L-16 -4 Z M17 -31 L10 -28 L9.5 -6 L16 -4 Z" fill="#f0c050"/>
<ellipse cx="-37.3" cy="-4" rx="5" ry="9" fill="url(#epinkglow)"/>
<ellipse cx="37.3" cy="-4" rx="5" ry="9" fill="url(#epinkglow)"/>
<ellipse cx="0" cy="22" rx="6" ry="11" fill="url(#epinkglow)"/>
<path d="M-26 0 H26" stroke="#ff9040" stroke-width="1.2" opacity="0.8"/>
<circle cx="0" cy="0" r="13" fill="url(#ecoreglow)"/>
</g></svg><svg class="a" style="left:680px;top:325px" width="40" height="45"><defs><radialGradient id="xrock" cx="40%" cy="35%" r="70%"><stop offset="0" stop-color="#959595"/><stop offset="0.7" stop-color="#767676"/><stop offset="1" stop-color="#565656"/></radialGradient><radialGradient id="xaglow"><stop offset="0.78" stop-color="#ff2a9a" stop-opacity="0.8"/><stop offset="1" stop-color="#ff2a9a" stop-opacity="0"/></radialGradient><radialGradient id="xbtail"><stop offset="0" stop-color="#f4f050"/><stop offset="0.5" stop-color="#f0b030" stop-opacity="0.75"/><stop offset="1" stop-color="#e08020" stop-opacity="0"/></radialGradient><radialGradient id="xbglow"><stop offset="0" stop-color="#ffa070" stop-opacity="0.9"/><stop offset="1" stop-color="#ff4030" stop-opacity="0"/></radialGradient><radialGradient id="xshipglow"><stop offset="0" stop-color="#ff2a8a" stop-opacity="0.3"/><stop offset="0.6" stop-color="#ff2a8a" stop-opacity="0.1"/><stop offset="1" stop-color="#ff2a8a" stop-opacity="0"/></radialGradient><radialGradient id="xpinkglow"><stop offset="0" stop-color="#fff"/><stop offset="0.45" stop-color="#ff90c8"/><stop offset="1" stop-color="#ff2a8a" stop-opacity="0"/></radialGradient><radialGradient id="xcoreglow"><stop offset="0" stop-color="#ffffe8"/><stop offset="0.35" stop-color="#ffd848"/><stop offset="1" stop-color="#ff6020" stop-opacity="0"/></radialGradient><linearGradient id="xhudtop" x1="0" y1="0" x2="0" y2="1"><stop offset="0" stop-color="#eef0f6"/><stop offset="0.545" stop-color="#eef0f6"/><stop offset="0.545" stop-color="#c4c7d1"/><stop offset="1" stop-color="#c4c7d1"/></linearGradient></defs><g>
<circle cx="24" cy="22" r="11.7" fill="none" stroke="#e0187a" stroke-width="5" opacity="0.65" style="filter:blur(1.6px)"/>
<circle cx="24" cy="22" r="11.0" fill="#c8186a"/>
<circle cx="24" cy="22" r="9.5" fill="#161616"/>
<circle cx="24" cy="22" r="7.7" fill="url(#xrock)"/>
<circle cx="17.16" cy="21.24" r="0.9500000000000001" fill="#4a4a4a"/>
<circle cx="19.725" cy="21.525" r="1.235" fill="#5e5e5e"/>
<circle cx="28.75" cy="24.375" r="1.6150000000000002" fill="#5a5a5a"/>
<circle cx="25.425" cy="27.225" r="0.9500000000000001" fill="#555"/>
<circle cx="23.525" cy="25.61" r="0.76" fill="#555"/>
<circle cx="21.625" cy="14.59" r="0.76" fill="#2a2a2a"/>
<circle cx="23.525" cy="14.21" r="0.47500000000000003" fill="#2a2a2a"/>
<circle cx="30.175" cy="18.675" r="1.045" fill="#6a6a6a"/>
</g></svg><svg class="a" style="left:462px;top:540px" width="24" height="32"><defs><radialGradient id="yrock" cx="40%" cy="35%" r="70%"><stop offset="0" stop-color="#959595"/><stop offset="0.7" stop-color="#767676"/><stop offset="1" stop-color="#565656"/></radialGradient><radialGradient id="yaglow"><stop offset="0.78" stop-color="#ff2a9a" stop-opacity="0.8"/><stop offset="1" stop-color="#ff2a9a" stop-opacity="0"/></radialGradient><radialGradient id="ybtail"><stop offset="0" stop-color="#f4f050"/><stop offset="0.5" stop-color="#f0b030" stop-opacity="0.75"/><stop offset="1" stop-color="#e08020" stop-opacity="0"/></radialGradient><radialGradient id="ybglow"><stop offset="0" stop-color="#ffa070" stop-opacity="0.9"/><stop offset="1" stop-color="#ff4030" stop-opacity="0"/></radialGradient><radialGradient id="yshipglow"><stop offset="0" stop-color="#ff2a8a" stop-opacity="0.3"/><stop offset="0.6" stop-color="#ff2a8a" stop-opacity="0.1"/><stop offset="1" stop-color="#ff2a8a" stop-opacity="0"/></radialGradient><radialGradient id="ypinkglow"><stop offset="0" stop-color="#fff"/><stop offset="0.45" stop-color="#ff90c8"/><stop offset="1" stop-color="#ff2a8a" stop-opacity="0"/></radialGradient><radialGradient id="ycoreglow"><stop offset="0" stop-color="#ffffe8"/><stop offset="0.35" stop-color="#ffd848"/><stop offset="1" stop-color="#ff6020" stop-opacity="0"/></radialGradient><linearGradient id="yhudtop" x1="0" y1="0" x2="0" y2="1"><stop offset="0" stop-color="#eef0f6"/><stop offset="0.545" stop-color="#eef0f6"/><stop offset="0.545" stop-color="#c4c7d1"/><stop offset="1" stop-color="#c4c7d1"/></linearGradient></defs><g transform="translate(12,6) scale(0.6)">
<ellipse cx="0" cy="30" rx="4.5" ry="17" fill="url(#ybtail)"/>
<circle cx="0" cy="13" r="15" fill="url(#ybglow)"/>
<path d="M0 -2 L4.5 6 L10 11 L6.5 14 L8.5 21 L3 18.5 L0 23 L-3 18.5 L-8.5 21 L-6.5 14 L-10 11 L-4.5 6 Z" fill="#ffd8c0" style="filter:blur(0.8px)"/>
<path d="M0 1 L3 7 L6 10.5 L4 13 L5 17 L1.5 15.5 L0 19 L-1.5 15.5 L-5 17 L-4 13 L-6 10.5 L-3 7 Z" fill="#fffaf6"/>
</g></svg><div class="a" style="left:700px;top:6px;width:560px;height:712px;border-radius:6px 6px 0 0;box-shadow:0 2px 12px 3px rgba(0,0,0,0.55)"></div><div class="a" style="left:700px;top:6px;width:560px;height:25px;background:#3c3b37;border-radius:6px 6px 0 0"></div><div class="a" style="left:700px;top:31px;width:560px;height:37px;background:#f0f0f0"></div><div class="a" style="left:706px;top:37px;width:516px;height:24px;background:#fff;border:1px solid #dcdcdc;border-radius:3px"></div><div class="a" style="left:699px;top:68px;width:561px;height:651px;background:#000;border:1px solid #9c9c9c;border-top:none"></div><svg class="a" style="left:700px;top:6px" width="560" height="62">
<circle cx="18.4" cy="12.4" r="7.6" fill="#e95a2c"/>
<path d="M15.8 9.8 L21 15 M21 9.8 L15.8 15" stroke="#3a1a10" stroke-width="1.2"/>
<circle cx="36" cy="12.4" r="7.6" fill="#6e6c66"/>
<path d="M32.5 12.6 H39.5" stroke="#2b2a27" stroke-width="1.2"/>
<circle cx="54.6" cy="12.4" r="7.6" fill="#6e6c66"/>
<rect x="51.7" y="9.9" width="5.8" height="5" fill="none" stroke="#2b2a27" stroke-width="1.1"/>
<circle cx="21.9" cy="43.2" r="6.3" fill="none" stroke="#777" stroke-width="1.1"/>
<rect x="21.1" y="41.5" width="1.6" height="5" fill="#777"/><rect x="21.1" y="38.8" width="1.6" height="1.6" fill="#777"/>
<path d="M36.5 42 V40 A3.7 3.7 0 0 1 43.9 40 V42" stroke="#12bc00" stroke-width="2" fill="none"/>
<rect x="34" y="42" width="12.5" height="8" fill="#12bc00"/>
<circle cx="455.5" cy="43.3" r="1.7" fill="#666"/><circle cx="461.8" cy="43.3" r="1.7" fill="#666"/><circle cx="468.1" cy="43.3" r="1.7" fill="#666"/>
<path d="M478 36.5 H494 V42 A8 8 0 0 1 478 42 Z" fill="#777"/>
<path d="M482 40.5 L486 44.5 L490 40.5" stroke="#fff" stroke-width="2" fill="none"/>
<path d="M510 35.5 L512.3 40.8 L518 41.2 L513.6 45 L515 50.5 L510 47.5 L505 50.5 L506.4 45 L502 41.2 L507.7 40.8 Z" fill="none" stroke="#555" stroke-width="1.4"/>
<path d="M535 37.7 H547.4 M535 43.3 H547.4 M535 48.9 H547.4" stroke="#555" stroke-width="1.8"/>
</svg><div class="a t" style="left:775.3px;top:10.64px;font-size:12px;color:#dfdbd2;letter-spacing:0.045px">SpaceShooter - Mozilla Firefox</div><div class="a t" style="left:757.6px;top:43.04px;font-size:12px;color:#939393;letter-spacing:0.186px">https://preview.<span style="color:#363636">construct.net</span>/local/index.html</div><svg class="a" style="left:796px;top:68px" width="366" height="650"><defs><radialGradient id="prock" cx="40%" cy="35%" r="70%"><stop offset="0" stop-color="#959595"/><stop offset="0.7" stop-color="#767676"/><stop offset="1" stop-color="#565656"/></radialGradient><radialGradient id="paglow"><stop offset="0.78" stop-color="#ff2a9a" stop-opacity="0.8"/><stop offset="1" stop-color="#ff2a9a" stop-opacity="0"/></radialGradient><radialGradient id="pbtail"><stop offset="0" stop-color="#f4f050"/><stop offset="0.5" stop-color="#f0b030" stop-opacity="0.75"/><stop offset="1" stop-color="#e08020" stop-opacity="0"/></radialGradient><radialGradient id="pbglow"><stop offset="0" stop-color="#ffa070" stop-opacity="0.9"/><stop offset="1" stop-color="#ff4030" stop-opacity="0"/></radialGradient><radialGradient id="pshipglow"><stop offset="0" stop-color="#ff2a8a" stop-opacity="0.3"/><stop offset="0.6" stop-color="#ff2a8a" stop-opacity="0.1"/><stop offset="1" stop-color="#ff2a8a" stop-opacity="0"/></radialGradient><radialGradient id="ppinkglow"><stop offset="0" stop-color="#fff"/><stop offset="0.45" stop-color="#ff90c8"/><stop offset="1" stop-color="#ff2a8a" stop-opacity="0"/></radialGradient><radialGradient id="pcoreglow"><stop offset="0" stop-color="#ffffe8"/><stop offset="0.35" stop-color="#ffd848"/><stop offset="1" stop-color="#ff6020" stop-opacity="0"/></radialGradient><linearGradient id="phudtop" x1="0" y1="0" x2="0" y2="1"><stop offset="0" stop-color="#eef0f6"/><stop offset="0.545" stop-color="#eef0f6"/><stop offset="0.545" stop-color="#c4c7d1"/><stop offset="1" stop-color="#c4c7d1"/></linearGradient><radialGradient id="pneb0" gradientUnits="userSpaceOnUse" cx="340" cy="580" r="200" gradientTransform="translate(340 580) scale(1 1.15) translate(-340 -580)"><stop offset="0" stop-color="#5c0a26" stop-opacity="0.7"/><stop offset="0.55" stop-color="#5c0a26" stop-opacity="0.315"/><stop offset="1" stop-color="#5c0a26" stop-opacity="0"/></radialGradient><radialGradient id="pneb1" gradientUnits="userSpaceOnUse" cx="200" cy="238" r="225" gradientTransform="translate(200 238) scale(1 0.7333333333333333) translate(-200 -238)"><stop offset="0" stop-color="#980a2e" stop-opacity="0.85"/><stop offset="0.55" stop-color="#980a2e" stop-opacity="0.3825"/><stop offset="1" stop-color="#980a2e" stop-opacity="0"/></radialGradient><radialGradient id="pneb2" gradientUnits="userSpaceOnUse" cx="70" cy="250" r="120" gradientTransform="translate(70 250) scale(1 0.75) translate(-70 -250)"><stop offset="0" stop-color="#800c2c" stop-opacity="0.4"/><stop offset="0.55" stop-color="#800c2c" stop-opacity="0.18000000000000002"/><stop offset="1" stop-color="#800c2c" stop-opacity="0"/></radialGradient><radialGradient id="pneb3" gradientUnits="userSpaceOnUse" cx="60" cy="480" r="110" gradientTransform="translate(60 480) scale(1 1.6363636363636365) translate(-60 -480)"><stop offset="0" stop-color="#3a1030" stop-opacity="0.35"/><stop offset="0.55" stop-color="#3a1030" stop-opacity="0.1575"/><stop offset="1" stop-color="#3a1030" stop-opacity="0"/></radialGradient><radialGradient id="pneb4" gradientUnits="userSpaceOnUse" cx="340" cy="70" r="100" gradientTransform="translate(340 70) scale(1 1.3) translate(-340 -70)"><stop offset="0" stop-color="#604050" stop-opacity="0.4"/><stop offset="0.55" stop-color="#604050" stop-opacity="0.18000000000000002"/><stop offset="1" stop-color="#604050" stop-opacity="0"/></radialGradient><radialGradient id="pneb5" gradientUnits="userSpaceOnUse" cx="30" cy="560" r="80" gradientTransform="translate(30 560) scale(1 2.125) translate(-30 -560)"><stop offset="0" stop-color="#4a1a40" stop-opacity="0.45"/><stop offset="0.55" stop-color="#4a1a40" stop-opacity="0.2025"/><stop offset="1" stop-color="#4a1a40" stop-opacity="0"/></radialGradient><radialGradient id="pneb6" gradientUnits="userSpaceOnUse" cx="0" cy="0" r="190" gradientTransform="translate(0 0) scale(1 1.0) translate(0 0)"><stop offset="0" stop-color="#060103" stop-opacity="0.7"/><stop offset="0.55" stop-color="#060103" stop-opacity="0.315"/><stop offset="1" stop-color="#060103" stop-opacity="0"/></radialGradient></defs><rect width="366" height="650" fill="#200616"/><rect width="366" height="650" fill="url(#pneb0)"/><rect width="366" height="650" fill="url(#pneb1)"/><rect width="366" height="650" fill="url(#pneb2)"/><rect width="366" height="650" fill="url(#pneb3)"/><rect width="366" height="650" fill="url(#pneb4)"/><rect width="366" height="650" fill="url(#pneb5)"/><rect width="366" height="650" fill="url(#pneb6)"/><circle cx="292.5" cy="115.8" r="1.0" fill="#ffffff" opacity="0.35"/><circle cx="78.6" cy="55.9" r="0.8" fill="#ffffff" opacity="0.34"/><circle cx="346.0" cy="39.5" r="0.6" fill="#ffffff" opacity="0.65"/><circle cx="83.6" cy="550.8" r="1.0" fill="#ff80d0" opacity="0.77"/><circle cx="66.1" cy="378.0" r="1.3" fill="#ffffff" opacity="0.40"/><circle cx="308.1" cy="35.4" r="0.8" fill="#e0a0e0" opacity="0.67"/><circle cx="170.4" cy="600.2" r="0.7" fill="#ffd0f0" opacity="0.46"/><circle cx="322.1" cy="122.5" r="0.8" fill="#e0a0e0" opacity="0.78"/><circle cx="359.2" cy="91.6" r="0.7" fill="#e0a0e0" opacity="0.38"/><circle cx="247.7" cy="329.9" r="0.7" fill="#ff80d0" opacity="0.49"/><circle cx="33.3" cy="632.8" r="0.5" fill="#e0a0e0" opacity="0.82"/><circle cx="201.4" cy="263.2" r="0.8" fill="#ff80d0" opacity="0.79"/><circle cx="30.4" cy="594.2" r="0.8" fill="#ff80d0" opacity="0.33"/><circle cx="246.4" cy="150.0" r="0.8" fill="#e0a0e0" opacity="0.34"/><circle cx="59.4" cy="321.0" r="1.0" fill="#e0a0e0" opacity="0.45"/><circle cx="249.9" cy="247.3" r="0.6" fill="#ffd0f0" opacity="0.38"/><circle cx="187.2" cy="357.3" r="1.0" fill="#ff80d0" opacity="0.40"/><circle cx="13.1" cy="525.2" r="0.7" fill="#ffffff" opacity="0.82"/><circle cx="51.4" cy="349.9" r="1.0" fill="#e0a0e0" opacity="0.52"/><circle cx="51.7" cy="526.6" r="0.5" fill="#e0a0e0" opacity="0.84"/><circle cx="15.6" cy="398.0" r="1.0" fill="#ffffff" opacity="0.38"/><circle cx="224.6" cy="45.7" r="0.6" fill="#ffd0f0" opacity="0.64"/><circle cx="2.3" cy="365.6" r="0.5" fill="#e0a0e0" opacity="0.77"/><circle cx="35.0" cy="439.1" r="0.7" fill="#e0a0e0" opacity="0.71"/><circle cx="59.1" cy="15.0" r="1.0" fill="#ffffff" opacity="0.50"/><circle cx="109.1" cy="417.9" r="0.5" fill="#ff80d0" opacity="0.68"/><circle cx="286.9" cy="126.8" r="1.0" fill="#ff80d0" opacity="0.73"/><circle cx="62.8" cy="586.3" r="0.6" fill="#e0a0e0" opacity="0.74"/><circle cx="310.8" cy="143.2" r="1.3" fill="#ffffff" opacity="0.32"/><circle cx="172.8" cy="125.9" r="1.0" fill="#e0a0e0" opacity="0.83"/><circle cx="264.7" cy="227.2" r="0.7" fill="#ffffff" opacity="0.34"/><circle cx="282.0" cy="139.3" r="1.0" fill="#e0a0e0" opacity="0.76"/><circle cx="125.9" cy="418.0" r="1.3" fill="#e0a0e0" opacity="0.37"/><circle cx="274.6" cy="310.7" r="0.6" fill="#ff80d0" opacity="0.54"/><circle cx="131.8" cy="330.8" r="0.5" fill="#ffd0f0" opacity="0.70"/><circle cx="10.1" cy="384.0" r="0.8" fill="#ffd0f0" opacity="0.74"/><circle cx="73.6" cy="636.4" r="0.7" fill="#ffd0f0" opacity="0.39"/><circle cx="82.7" cy="454.2" r="1.0" fill="#ffd0f0" opacity="0.71"/><circle cx="60.8" cy="584.8" r="0.5" fill="#ff80d0" opacity="0.44"/><circle cx="20.1" cy="446.0" r="0.8" fill="#ffffff" opacity="0.76"/><circle cx="129.5" cy="297.8" r="1.0" fill="#e0a0e0" opacity="0.75"/><circle cx="321.4" cy="85.0" r="0.6" fill="#ffffff" opacity="0.59"/><circle cx="284.2" cy="395.6" r="0.6" fill="#e0a0e0" opacity="0.39"/><circle cx="319.2" cy="46.1" r="1.0" fill="#e0a0e0" opacity="0.59"/><circle cx="38.8" cy="364.2" r="0.6" fill="#ffffff" opacity="0.41"/><circle cx="185.8" cy="365.1" r="0.5" fill="#ffd0f0" opacity="0.54"/><circle cx="280.8" cy="51.7" r="0.7" fill="#ffd0f0" opacity="0.81"/><circle cx="50.2" cy="79.1" r="0.8" fill="#ffd0f0" opacity="0.47"/><circle cx="274.5" cy="64.1" r="0.6" fill="#ff80d0" opacity="0.82"/><circle cx="320.7" cy="105.7" r="0.5" fill="#e0a0e0" opacity="0.52"/><circle cx="197.6" cy="274.2" r="0.8" fill="#e0a0e0" opacity="0.85"/><circle cx="291.8" cy="120.3" r="0.7" fill="#e0a0e0" opacity="0.31"/><circle cx="317.4" cy="96.1" r="0.7" fill="#ffffff" opacity="0.58"/><circle cx="48.2" cy="591.6" r="0.5" fill="#ffffff" opacity="0.45"/><circle cx="66.4" cy="491.3" r="0.8" fill="#ff80d0" opacity="0.77"/><circle cx="64.1" cy="627.4" r="1.3" fill="#ff80d0" opacity="0.48"/><circle cx="231.8" cy="397.0" r="0.7" fill="#ffffff" opacity="0.82"/><circle cx="30.6" cy="556.5" r="0.5" fill="#ffffff" opacity="0.45"/><circle cx="51.0" cy="417.0" r="0.7" fill="#ffffff" opacity="0.64"/><circle cx="307.7" cy="134.8" r="0.7" fill="#ffd0f0" opacity="0.59"/><circle cx="18.8" cy="626.0" r="0.5" fill="#ffffff" opacity="0.85"/><circle cx="14.3" cy="295.1" r="1.0" fill="#e0a0e0" opacity="0.56"/><circle cx="14.2" cy="399.0" r="1.0" fill="#e0a0e0" opacity="0.76"/><circle cx="112.6" cy="139.9" r="0.6" fill="#ffd0f0" opacity="0.49"/><circle cx="72.3" cy="402.7" r="0.5" fill="#ff80d0" opacity="0.34"/><circle cx="245.4" cy="183.3" r="0.6" fill="#ffffff" opacity="0.68"/><circle cx="299.7" cy="112.5" r="0.7" fill="#ff80d0" opacity="0.83"/><circle cx="28.2" cy="469.8" r="0.7" fill="#e0a0e0" opacity="0.51"/><circle cx="201.6" cy="356.5" r="0.5" fill="#ffffff" opacity="0.35"/><circle cx="36.2" cy="641.1" r="0.7" fill="#ffffff" opacity="0.65"/><circle cx="40.5" cy="630.7" r="1.3" fill="#e0a0e0" opacity="0.73"/><circle cx="263.8" cy="321.2" r="0.7" fill="#ffd0f0" opacity="0.70"/><circle cx="32.2" cy="399.8" r="0.8" fill="#ffd0f0" opacity="0.70"/><circle cx="275.5" cy="369.5" r="0.5" fill="#ffd0f0" opacity="0.75"/><circle cx="355.9" cy="91.6" r="0.5" fill="#e0a0e0" opacity="0.51"/><circle cx="253.4" cy="307.3" r="0.6" fill="#ffffff" opacity="0.57"/><circle cx="339.7" cy="6.8" r="1.0" fill="#ffffff" opacity="0.35"/><circle cx="59.8" cy="559.7" r="0.7" fill="#ffd0f0" opacity="0.43"/><circle cx="249.2" cy="291.1" r="0.8" fill="#ff80d0" opacity="0.34"/><circle cx="225.8" cy="417.8" r="0.5" fill="#ff80d0" opacity="0.63"/><circle cx="150.6" cy="234.8" r="0.6" fill="#ffffff" opacity="0.31"/><circle cx="214.1" cy="320.5" r="0.8" fill="#ff80d0" opacity="0.46"/><circle cx="71.9" cy="382.7" r="1.0" fill="#ffffff" opacity="0.41"/><circle cx="6.4" cy="298.3" r="1.0" fill="#e0a0e0" opacity="0.83"/><circle cx="141.6" cy="595.8" r="0.6" fill="#ffffff" opacity="0.34"/><circle cx="54.9" cy="294.3" r="1.3" fill="#e0a0e0" opacity="0.50"/><circle cx="177.9" cy="16.1" r="0.5" fill="#e0a0e0" opacity="0.82"/><circle cx="214.9" cy="335.5" r="0.7" fill="#ff80d0" opacity="0.37"/><circle cx="24.1" cy="521.4" r="0.6" fill="#ff80d0" opacity="0.69"/><circle cx="268.3" cy="162.8" r="1.0" fill="#e0a0e0" opacity="0.34"/><circle cx="312.7" cy="182.4" r="0.5" fill="#ff80d0" opacity="0.76"/><circle cx="300.1" cy="133.6" r="1.0" fill="#ff80d0" opacity="0.47"/><circle cx="156.6" cy="18.9" r="1.3" fill="#ffd0f0" opacity="0.52"/><circle cx="363.5" cy="41.2" r="1.0" fill="#ff80d0" opacity="0.71"/><circle cx="23.5" cy="551.0" r="1.3" fill="#ffd0f0" opacity="0.44"/><circle cx="22.6" cy="631.2" r="1.3" fill="#ffd0f0" opacity="0.39"/><circle cx="18.9" cy="470.8" r="0.7" fill="#e0a0e0" opacity="0.85"/><circle cx="34.6" cy="648.2" r="0.7" fill="#ff80d0" opacity="0.61"/><circle cx="31.1" cy="369.9" r="0.5" fill="#e0a0e0" opacity="0.71"/><circle cx="122.3" cy="292.6" r="0.7" fill="#e0a0e0" opacity="0.71"/><circle cx="45.8" cy="487.3" r="1.3" fill="#ffd0f0" opacity="0.73"/><circle cx="267.7" cy="138.7" r="0.8" fill="#ffffff" opacity="0.82"/><circle cx="41.3" cy="437.1" r="0.8" fill="#e0a0e0" opacity="0.83"/><circle cx="132.7" cy="491.3" r="1.0" fill="#e0a0e0" opacity="0.77"/><circle cx="342.4" cy="85.5" r="1.3" fill="#e0a0e0" opacity="0.36"/><circle cx="90.8" cy="495.8" r="0.6" fill="#ffffff" opacity="0.61"/><circle cx="59.1" cy="393.7" r="1.0" fill="#ffffff" opacity="0.65"/><circle cx="300.4" cy="108.6" r="1.0" fill="#e0a0e0" opacity="0.47"/><circle cx="293.0" cy="107.9" r="0.8" fill="#ff80d0" opacity="0.69"/><circle cx="255.1" cy="110.5" r="0.8" fill="#ffd0f0" opacity="0.34"/><circle cx="26.0" cy="440.8" r="0.7" fill="#ff80d0" opacity="0.70"/><circle cx="324.9" cy="111.1" r="1.0" fill="#e0a0e0" opacity="0.34"/><circle cx="114.1" cy="533.0" r="0.6" fill="#ff80d0" opacity="0.56"/><circle cx="107.9" cy="618.8" r="0.8" fill="#ffd0f0" opacity="0.64"/><circle cx="255.6" cy="323.3" r="0.8" fill="#ffffff" opacity="0.33"/><circle cx="51.9" cy="33.7" r="0.5" fill="#e0a0e0" opacity="0.40"/><circle cx="323.4" cy="476.3" r="0.5" fill="#ff80d0" opacity="0.81"/><circle cx="271.4" cy="267.5" r="0.5" fill="#e0a0e0" opacity="0.47"/><circle cx="360.5" cy="287.6" r="0.5" fill="#ff80d0" opacity="0.30"/><circle cx="77.3" cy="532.9" r="0.6" fill="#ff80d0" opacity="0.51"/><circle cx="158.3" cy="32.0" r="0.8" fill="#e0a0e0" opacity="0.41"/><circle cx="22.7" cy="329.5" r="1.3" fill="#e0a0e0" opacity="0.53"/><circle cx="296.1" cy="78.2" r="0.5" fill="#ffffff" opacity="0.44"/><circle cx="124.1" cy="177.0" r="1.0" fill="#ff80d0" opacity="0.32"/><circle cx="108.9" cy="469.0" r="1.0" fill="#ffffff" opacity="0.80"/><circle cx="337.2" cy="139.7" r="0.8" fill="#e0a0e0" opacity="0.82"/><circle cx="334.4" cy="529.6" r="0.6" fill="#ffd0f0" opacity="0.81"/><circle cx="149.7" cy="372.5" r="0.6" fill="#ff80d0" opacity="0.63"/><circle cx="168.6" cy="509.5" r="1.0" fill="#ffd0f0" opacity="0.34"/><circle cx="300.2" cy="121.0" r="0.5" fill="#ff80d0" opacity="0.56"/><circle cx="137.3" cy="440.8" r="0.7" fill="#ffd0f0" opacity="0.64"/><circle cx="153.4" cy="530.3" r="0.6" fill="#e0a0e0" opacity="0.43"/><circle cx="187.1" cy="361.9" r="1.3" fill="#ff80d0" opacity="0.72"/><circle cx="60.4" cy="577.5" r="0.6" fill="#ffd0f0" opacity="0.45"/><circle cx="59.7" cy="577.6" r="1.0" fill="#ffffff" opacity="0.43"/><circle cx="362.7" cy="90.6" r="0.6" fill="#ff80d0" opacity="0.76"/><circle cx="25.9" cy="445.6" r="1.0" fill="#ffd0f0" opacity="0.84"/><circle cx="136.2" cy="563.0" r="0.8" fill="#ffffff" opacity="0.63"/><circle cx="23.0" cy="622.0" r="0.5" fill="#ffd0f0" opacity="0.50"/><circle cx="64.4" cy="450.9" r="0.6" fill="#ff80d0" opacity="0.75"/><circle cx="33.6" cy="483.5" r="0.6" fill="#e0a0e0" opacity="0.32"/><circle cx="302.6" cy="103.8" r="1.3" fill="#ffffff" opacity="0.60"/><circle cx="47.9" cy="491.6" r="0.7" fill="#e0a0e0" opacity="0.67"/><circle cx="114.3" cy="368.2" r="0.7" fill="#ffffff" opacity="0.53"/><circle cx="364.8" cy="236.5" r="0.6" fill="#e0a0e0" opacity="0.51"/><circle cx="326.6" cy="70.6" r="0.5" fill="#e0a0e0" opacity="0.75"/><circle cx="10.6" cy="431.6" r="0.5" fill="#ffd0f0" opacity="0.33"/><circle cx="101.4" cy="577.0" r="0.7" fill="#ffd0f0" opacity="0.71"/><circle cx="33.1" cy="461.8" r="0.5" fill="#e0a0e0" opacity="0.36"/><circle cx="289.9" cy="523.1" r="0.7" fill="#ffffff" opacity="0.37"/><circle cx="176.7" cy="34.7" r="1.3" fill="#ffd0f0" opacity="0.51"/><circle cx="45.3" cy="530.2" r="0.6" fill="#ffd0f0" opacity="0.76"/><circle cx="315.6" cy="92.0" r="0.8" fill="#ffd0f0" opacity="0.50"/><circle cx="195.7" cy="270.0" r="1.0" fill="#ffffff" opacity="0.76"/><circle cx="50.0" cy="493.0" r="1.0" fill="#ff80d0" opacity="0.77"/><circle cx="2.1" cy="378.2" r="1.3" fill="#e0a0e0" opacity="0.50"/><circle cx="318.7" cy="24.5" r="0.6" fill="#e0a0e0" opacity="0.55"/><circle cx="296.7" cy="260.2" r="0.5" fill="#e0a0e0" opacity="0.37"/><circle cx="6.5" cy="495.6" r="0.5" fill="#ffd0f0" opacity="0.32"/><circle cx="142.7" cy="373.5" r="0.5" fill="#e0a0e0" opacity="0.33"/><circle cx="78.8" cy="559.4" r="1.0" fill="#ffffff" opacity="0.70"/><circle cx="44.9" cy="628.7" r="0.6" fill="#ffd0f0" opacity="0.68"/><circle cx="10.3" cy="381.0" r="0.7" fill="#ff80d0" opacity="0.79"/><circle cx="167.0" cy="165.2" r="0.8" fill="#ff80d0" opacity="0.41"/><circle cx="296.5" cy="117.5" r="0.6" fill="#ff80d0" opacity="0.52"/><circle cx="90.0" cy="616.5" r="0.5" fill="#ffffff" opacity="0.72"/><circle cx="51.8" cy="401.5" r="1.0" fill="#ffffff" opacity="0.62"/><circle cx="9.4" cy="625.4" r="0.7" fill="#ff80d0" opacity="0.45"/><circle cx="20.0" cy="448.8" r="0.6" fill="#ffffff" opacity="0.40"/><circle cx="214.4" cy="431.4" r="0.7" fill="#ffffff" opacity="0.70"/><circle cx="5.2" cy="363.3" r="1.0" fill="#ffffff" opacity="0.50"/><circle cx="293.0" cy="104.0" r="0.5" fill="#ff80d0" opacity="0.30"/><circle cx="58.1" cy="9.2" r="0.6" fill="#e0a0e0" opacity="0.69"/><circle cx="234.6" cy="358.4" r="0.7" fill="#ff80d0" opacity="0.52"/><circle cx="20.5" cy="533.6" r="0.7" fill="#e0a0e0" opacity="0.63"/><circle cx="27.7" cy="625.0" r="0.5" fill="#ffffff" opacity="0.32"/><circle cx="335.7" cy="165.6" r="0.5" fill="#ffd0f0" opacity="0.31"/><circle cx="257.2" cy="105.1" r="1.3" fill="#ffd0f0" opacity="0.65"/><circle cx="337.6" cy="73.5" r="1.3" fill="#ffffff" opacity="0.73"/><circle cx="58.8" cy="484.1" r="1.3" fill="#ffd0f0" opacity="0.66"/><circle cx="337.4" cy="124.5" r="0.5" fill="#ff80d0" opacity="0.48"/><circle cx="0.2" cy="329.1" r="1.3" fill="#ff80d0" opacity="0.73"/><circle cx="330.7" cy="128.3" r="0.6" fill="#ffd0f0" opacity="0.44"/><circle cx="74.2" cy="103.5" r="0.7" fill="#e0a0e0" opacity="0.41"/><circle cx="257.4" cy="150.3" r="1.3" fill="#e0a0e0" opacity="0.84"/><circle cx="10.9" cy="602.6" r="0.8" fill="#ffd0f0" opacity="0.83"/><circle cx="31.1" cy="342.7" r="1.0" fill="#ffd0f0" opacity="0.34"/><circle cx="297.7" cy="102.8" r="0.6" fill="#ffffff" opacity="0.68"/><circle cx="293.2" cy="328.5" r="0.7" fill="#ffffff" opacity="0.41"/><circle cx="276.6" cy="462.3" r="0.8" fill="#ffd0f0" opacity="0.36"/><circle cx="232.1" cy="536.3" r="1.3" fill="#e0a0e0" opacity="0.65"/><circle cx="20.4" cy="427.6" r="0.7" fill="#ffffff" opacity="0.81"/><circle cx="61.2" cy="346.8" r="1.0" fill="#ff80d0" opacity="0.58"/><circle cx="341.5" cy="49.0" r="1.0" fill="#ff80d0" opacity="0.73"/><circle cx="323.0" cy="52.6" r="0.5" fill="#ff80d0" opacity="0.62"/><circle cx="319.6" cy="54.5" r="0.5" fill="#e0a0e0" opacity="0.30"/><circle cx="191.1" cy="269.4" r="0.8" fill="#ff80d0" opacity="0.63"/><circle cx="295.6" cy="130.4" r="1.3" fill="#ffd0f0" opacity="0.43"/><circle cx="187.3" cy="242.3" r="1.3" fill="#ffffff" opacity="0.61"/><circle cx="72.5" cy="523.4" r="1.3" fill="#ffffff" opacity="0.35"/><circle cx="20.5" cy="591.5" r="1.0" fill="#ffd0f0" opacity="0.39"/><circle cx="46.4" cy="386.2" r="1.3" fill="#ffffff" opacity="0.71"/><circle cx="29.1" cy="627.8" r="0.8" fill="#ff80d0" opacity="0.68"/><circle cx="278.3" cy="147.2" r="1.3" fill="#ffd0f0" opacity="0.43"/><circle cx="23.2" cy="359.4" r="0.6" fill="#ffd0f0" opacity="0.70"/><circle cx="12.4" cy="638.4" r="0.7" fill="#ff80d0" opacity="0.83"/><circle cx="266.7" cy="66.2" r="1.3" fill="#e0a0e0" opacity="0.36"/><circle cx="313.6" cy="63.2" r="0.8" fill="#ffffff" opacity="0.45"/><circle cx="330.0" cy="151.9" r="0.8" fill="#e0a0e0" opacity="0.32"/><circle cx="159.8" cy="144.6" r="1.3" fill="#ffffff" opacity="0.46"/><circle cx="29.8" cy="637.9" r="0.6" fill="#e0a0e0" opacity="0.80"/><circle cx="29.8" cy="619.1" r="0.6" fill="#ffd0f0" opacity="0.67"/><circle cx="225.4" cy="337.4" r="0.7" fill="#ffffff" opacity="0.65"/><circle cx="88.7" cy="260.1" r="1.3" fill="#ff80d0" opacity="0.65"/><circle cx="176.7" cy="12.8" r="0.8" fill="#ffd0f0" opacity="0.59"/><circle cx="120.1" cy="6.9" r="0.8" fill="#ffffff" opacity="0.80"/><circle cx="73.1" cy="226.3" r="1.0" fill="#ffd0f0" opacity="0.55"/><circle cx="82.9" cy="643.6" r="0.7" fill="#e0a0e0" opacity="0.59"/><circle cx="73.2" cy="613.6" r="0.8" fill="#ffffff" opacity="0.58"/><circle cx="23.7" cy="645.4" r="0.7" fill="#ffffff" opacity="0.51"/><circle cx="102.5" cy="504.3" r="1.3" fill="#ff80d0" opacity="0.49"/><circle cx="21.8" cy="230.5" r="1.0" fill="#e0a0e0" opacity="0.83"/><circle cx="335.7" cy="147.7" r="1.3" fill="#ffd0f0" opacity="0.41"/><circle cx="53.5" cy="432.9" r="0.8" fill="#ff80d0" opacity="0.56"/><circle cx="237.8" cy="506.9" r="0.8" fill="#ffd0f0" opacity="0.50"/><circle cx="21.8" cy="408.3" r="1.3" fill="#ffffff" opacity="0.40"/><circle cx="292.4" cy="232.7" r="1.3" fill="#e0a0e0" opacity="0.47"/><circle cx="1.4" cy="617.7" r="0.7" fill="#ff80d0" opacity="0.38"/><circle cx="20.9" cy="538.1" r="0.7" fill="#ffd0f0" opacity="0.73"/><circle cx="22.1" cy="409.7" r="0.5" fill="#ffffff" opacity="0.42"/><circle cx="68.0" cy="293.8" r="0.6" fill="#e0a0e0" opacity="0.41"/><circle cx="61.5" cy="579.2" r="1.0" fill="#ffffff" opacity="0.84"/><circle cx="43.6" cy="602.9" r="0.6" fill="#ffd0f0" opacity="0.57"/><circle cx="227.6" cy="236.9" r="0.5" fill="#ff80d0" opacity="0.61"/><circle cx="62.4" cy="523.7" r="0.5" fill="#ffd0f0" opacity="0.57"/><circle cx="262.6" cy="110.4" r="1.3" fill="#ff80d0" opacity="0.30"/><circle cx="4.8" cy="640.3" r="0.8" fill="#e0a0e0" opacity="0.51"/><circle cx="247.4" cy="117.3" r="0.7" fill="#ffffff" opacity="0.65"/><circle cx="311.3" cy="56.5" r="0.6" fill="#e0a0e0" opacity="0.32"/><circle cx="55.4" cy="485.6" r="0.7" fill="#ffd0f0" opacity="0.56"/><circle cx="107.2" cy="538.0" r="0.8" fill="#ff80d0" opacity="0.48"/><circle cx="126.2" cy="132.3" r="0.8" fill="#ff80d0" opacity="0.74"/><circle cx="155.7" cy="363.3" r="1.3" fill="#ffffff" opacity="0.35"/><circle cx="58.4" cy="623.5" r="0.5" fill="#ffffff" opacity="0.52"/><circle cx="314.9" cy="79.4" r="1.3" fill="#e0a0e0" opacity="0.33"/><circle cx="137.7" cy="232.2" r="1.3" fill="#ffffff" opacity="0.35"/><circle cx="44.7" cy="518.1" r="1.3" fill="#ffffff" opacity="0.40"/><circle cx="56.6" cy="509.5" r="1.3" fill="#ff80d0" opacity="0.44"/><circle cx="328.9" cy="103.4" r="1.3" fill="#ffffff" opacity="0.62"/><circle cx="44.6" cy="642.5" r="0.8" fill="#e0a0e0" opacity="0.62"/><circle cx="325.7" cy="5.3" r="1.3" fill="#e0a0e0" opacity="0.84"/><circle cx="200.9" cy="53.9" r="0.8" fill="#ffd0f0" opacity="0.42"/><circle cx="113.1" cy="542.3" r="0.5" fill="#ffffff" opacity="0.84"/><circle cx="343.3" cy="66.2" r="1.3" fill="#e0a0e0" opacity="0.61"/><circle cx="325.3" cy="96.6" r="1.3" fill="#ffd0f0" opacity="0.69"/><circle cx="331.5" cy="115.4" r="0.8" fill="#ff80d0" opacity="0.55"/><circle cx="19.3" cy="20.8" r="0.5" fill="#ffffff" opacity="0.31"/><circle cx="23.1" cy="372.2" r="0.8" fill="#ff80d0" opacity="0.63"/><circle cx="25.3" cy="617.7" r="0.6" fill="#ffffff" opacity="0.38"/><circle cx="235.5" cy="377.2" r="0.8" fill="#e0a0e0" opacity="0.51"/><circle cx="287.2" cy="368.4" r="0.7" fill="#ff80d0" opacity="0.45"/><circle cx="265.6" cy="10.1" r="0.6" fill="#ff80d0" opacity="0.63"/><circle cx="267.4" cy="141.9" r="1.0" fill="#ffd0f0" opacity="0.72"/><circle cx="103.7" cy="1.1" r="0.7" fill="#ffd0f0" opacity="0.45"/><circle cx="44.4" cy="365.5" r="0.7" fill="#ffd0f0" opacity="0.76"/><circle cx="51.1" cy="397.7" r="0.8" fill="#ffffff" opacity="0.49"/><circle cx="66.9" cy="508.0" r="1.3" fill="#ffd0f0" opacity="0.81"/><circle cx="327.7" cy="14.8" r="0.6" fill="#ffffff" opacity="0.81"/><circle cx="168.3" cy="57.0" r="0.7" fill="#ffd0f0" opacity="0.72"/><circle cx="79.8" cy="614.9" r="1.0" fill="#ffd0f0" opacity="0.48"/><circle cx="345.5" cy="139.7" r="0.7" fill="#ff80d0" opacity="0.50"/><circle cx="44.0" cy="628.2" r="0.8" fill="#ffffff" opacity="0.51"/><circle cx="64.7" cy="511.7" r="1.0" fill="#ff80d0" opacity="0.32"/><circle cx="354.0" cy="77.0" r="1.0" fill="#ffd0f0" opacity="0.57"/><circle cx="37.5" cy="496.6" r="0.8" fill="#ffd0f0" opacity="0.72"/><circle cx="297.2" cy="183.4" r="0.8" fill="#ffffff" opacity="0.35"/><circle cx="44.0" cy="355.7" r="0.5" fill="#e0a0e0" opacity="0.77"/><circle cx="258.5" cy="58.5" r="0.7" fill="#ffffff" opacity="0.61"/><circle cx="245.1" cy="255.5" r="0.8" fill="#ff80d0" opacity="0.77"/><circle cx="363.0" cy="144.1" r="0.5" fill="#ff80d0" opacity="0.82"/><circle cx="77.2" cy="618.5" r="0.5" fill="#e0a0e0" opacity="0.44"/><circle cx="298.7" cy="112.9" r="0.6" fill="#ff80d0" opacity="0.67"/><circle cx="60.8" cy="516.4" r="0.7" fill="#e0a0e0" opacity="0.50"/><circle cx="32.5" cy="577.0" r="0.6" fill="#ffffff" opacity="0.80"/><circle cx="305.3" cy="93.3" r="0.6" fill="#ff80d0" opacity="0.34"/><circle cx="51.2" cy="290.7" r="0.5" fill="#e0a0e0" opacity="0.81"/><circle cx="230.0" cy="294.0" r="0.7" fill="#ffd0f0" opacity="0.48"/><circle cx="144.1" cy="333.5" r="1.3" fill="#e0a0e0" opacity="0.33"/><circle cx="284.2" cy="116.4" r="0.8" fill="#ffd0f0" opacity="0.53"/><circle cx="44.4" cy="624.7" r="0.6" fill="#ffffff" opacity="0.44"/><circle cx="133.1" cy="631.2" r="0.5" fill="#ffd0f0" opacity="0.65"/><circle cx="34.8" cy="515.1" r="0.6" fill="#e0a0e0" opacity="0.83"/><circle cx="365.3" cy="601.3" r="0.5" fill="#e0a0e0" opacity="0.51"/><circle cx="21.0" cy="472.2" r="0.7" fill="#ffffff" opacity="0.38"/><circle cx="21.1" cy="649.2" r="0.5" fill="#ff80d0" opacity="0.73"/><circle cx="94.7" cy="552.9" r="0.7" fill="#ffd0f0" opacity="0.61"/><circle cx="190.9" cy="149.8" r="0.6" fill="#ffffff" opacity="0.41"/><circle cx="325.5" cy="475.1" r="0.7" fill="#ffd0f0" opacity="0.40"/><circle cx="152.9" cy="276.4" r="0.7" fill="#ffffff" opacity="0.41"/><circle cx="25.9" cy="509.9" r="1.3" fill="#e0a0e0" opacity="0.78"/><circle cx="93.7" cy="509.6" r="1.3" fill="#ffd0f0" opacity="0.45"/><circle cx="62.9" cy="448.4" r="1.0" fill="#ffffff" opacity="0.63"/><circle cx="73.2" cy="536.2" r="0.7" fill="#ff80d0" opacity="0.69"/><circle cx="317.7" cy="374.6" r="0.5" fill="#ffffff" opacity="0.46"/><circle cx="181.1" cy="333.7" r="1.0" fill="#ffd0f0" opacity="0.74"/><circle cx="342.6" cy="88.2" r="0.5" fill="#ffffff" opacity="0.47"/><circle cx="176.7" cy="261.2" r="1.0" fill="#e0a0e0" opacity="0.65"/><circle cx="127.6" cy="316.0" r="0.5" fill="#ffffff" opacity="0.69"/><circle cx="18.8" cy="542.4" r="0.7" fill="#ffffff" opacity="0.36"/><circle cx="279.2" cy="104.4" r="0.6" fill="#e0a0e0" opacity="0.38"/><circle cx="305.5" cy="108.1" r="1.3" fill="#e0a0e0" opacity="0.51"/><circle cx="0.3" cy="636.8" r="0.5" fill="#ff80d0" opacity="0.73"/><circle cx="23.7" cy="525.2" r="1.0" fill="#ff80d0" opacity="0.74"/><circle cx="310.2" cy="34.8" r="1.0" fill="#ff80d0" opacity="0.38"/><circle cx="57.2" cy="533.5" r="0.5" fill="#ffffff" opacity="0.59"/><circle cx="293.8" cy="109.8" r="0.6" fill="#e0a0e0" opacity="0.53"/><circle cx="342.9" cy="411.6" r="0.5" fill="#ff80d0" opacity="0.32"/><circle cx="228.2" cy="408.4" r="0.5" fill="#ff80d0" opacity="0.64"/><circle cx="283.9" cy="104.7" r="0.7" fill="#ff80d0" opacity="0.36"/><circle cx="329.9" cy="54.9" r="1.0" fill="#ffd0f0" opacity="0.59"/><circle cx="18.8" cy="549.1" r="1.3" fill="#e0a0e0" opacity="0.60"/><circle cx="63.7" cy="528.6" r="0.7" fill="#e0a0e0" opacity="0.42"/><circle cx="145.1" cy="600.7" r="0.6" fill="#ffd0f0" opacity="0.77"/><circle cx="4.6" cy="423.5" r="0.6" fill="#ffffff" opacity="0.46"/><circle cx="321.8" cy="34.3" r="1.3" fill="#e0a0e0" opacity="0.33"/><circle cx="129.6" cy="495.8" r="1.0" fill="#ffd0f0" opacity="0.42"/><circle cx="126.0" cy="360.0" r="1.0" fill="#ff80d0" opacity="0.64"/><circle cx="189.5" cy="480.2" r="1.3" fill="#e0a0e0" opacity="0.81"/><circle cx="145.7" cy="192.8" r="0.6" fill="#ffffff" opacity="0.53"/><circle cx="25.7" cy="460.7" r="0.8" fill="#ffd0f0" opacity="0.83"/><circle cx="32.3" cy="552.2" r="0.5" fill="#e0a0e0" opacity="0.51"/><circle cx="21.5" cy="354.3" r="0.8" fill="#e0a0e0" opacity="0.59"/><circle cx="46.6" cy="599.0" r="0.6" fill="#e0a0e0" opacity="0.54"/><circle cx="349.7" cy="23.7" r="1.0" fill="#ff80d0" opacity="0.76"/><circle cx="127.8" cy="461.1" r="0.5" fill="#e0a0e0" opacity="0.33"/><circle cx="35.5" cy="615.4" r="0.8" fill="#e0a0e0" opacity="0.58"/><circle cx="61.3" cy="450.4" r="0.8" fill="#ffffff" opacity="0.82"/><circle cx="315.2" cy="88.6" r="1.3" fill="#ffd0f0" opacity="0.61"/><circle cx="353.0" cy="316.4" r="0.8" fill="#ff80d0" opacity="0.72"/><circle cx="194.8" cy="272.0" r="0.7" fill="#ffffff" opacity="0.50"/><circle cx="187.6" cy="71.8" r="0.7" fill="#e0a0e0" opacity="0.68"/><circle cx="291.0" cy="115.5" r="1.0" fill="#ff80d0" opacity="0.63"/><circle cx="168.5" cy="288.9" r="0.8" fill="#ffffff" opacity="0.31"/><circle cx="53.5" cy="263.6" r="0.8" fill="#ffffff" opacity="0.76"/><circle cx="323.3" cy="155.8" r="1.0" fill="#ffd0f0" opacity="0.45"/><circle cx="44.3" cy="523.3" r="1.0" fill="#ffffff" opacity="0.72"/><circle cx="354.6" cy="108.0" r="0.8" fill="#ffffff" opacity="0.64"/><circle cx="186.8" cy="256.2" r="1.3" fill="#ff80d0" opacity="0.43"/><circle cx="23.1" cy="124.6" r="1.0" fill="#ffffff" opacity="0.51"/><circle cx="46.0" cy="626.2" r="0.8" fill="#ff80d0" opacity="0.47"/><circle cx="181.4" cy="617.3" r="0.6" fill="#ffd0f0" opacity="0.67"/><circle cx="88.5" cy="499.4" r="0.6" fill="#ffd0f0" opacity="0.35"/><circle cx="362.0" cy="113.0" r="0.8" fill="#ffffff" opacity="0.61"/><circle cx="17.1" cy="510.1" r="0.5" fill="#e0a0e0" opacity="0.83"/><circle cx="128.6" cy="159.2" r="0.6" fill="#ff80d0" opacity="0.56"/><circle cx="339.0" cy="70.0" r="0.6" fill="#ffd0f0" opacity="0.43"/><circle cx="92.7" cy="462.6" r="0.6" fill="#ffd0f0" opacity="0.50"/><circle cx="28.3" cy="492.1" r="0.7" fill="#ffd0f0" opacity="0.82"/><circle cx="22.2" cy="433.6" r="0.7" fill="#e0a0e0" opacity="0.63"/><circle cx="0.2" cy="402.4" r="1.0" fill="#ffffff" opacity="0.42"/><circle cx="320.9" cy="50.6" r="0.8" fill="#ffd0f0" opacity="0.32"/><circle cx="46.8" cy="465.3" r="0.6" fill="#ffffff" opacity="0.48"/><circle cx="39.3" cy="293.2" r="0.6" fill="#ff80d0" opacity="0.34"/><circle cx="52.9" cy="510.5" r="0.7" fill="#e0a0e0" opacity="0.50"/><circle cx="323.1" cy="559.8" r="0.6" fill="#ffd0f0" opacity="0.82"/><circle cx="208.1" cy="227.0" r="0.8" fill="#e0a0e0" opacity="0.31"/><circle cx="66.4" cy="537.0" r="1.3" fill="#ffffff" opacity="0.42"/><circle cx="56.7" cy="476.8" r="1.3" fill="#ffd0f0" opacity="0.65"/><circle cx="256.9" cy="89.7" r="0.7" fill="#ff80d0" opacity="0.81"/><circle cx="40.9" cy="496.4" r="1.3" fill="#ffffff" opacity="0.46"/><circle cx="214.2" cy="452.4" r="0.6" fill="#ffffff" opacity="0.67"/><circle cx="76.9" cy="594.4" r="1.3" fill="#e0a0e0" opacity="0.80"/><circle cx="108.4" cy="539.2" r="0.6" fill="#ffffff" opacity="0.45"/><circle cx="30.1" cy="556.1" r="1.0" fill="#e0a0e0" opacity="0.71"/><circle cx="159.7" cy="249.9" r="1.0" fill="#ffd0f0" opacity="0.77"/><circle cx="345.0" cy="122.7" r="1.0" fill="#ffd0f0" opacity="0.44"/><circle cx="233.3" cy="353.6" r="0.6" fill="#ffd0f0" opacity="0.83"/><circle cx="101.6" cy="579.1" r="0.6" fill="#e0a0e0" opacity="0.38"/><circle cx="299.1" cy="106.9" r="1.3" fill="#ff80d0" opacity="0.54"/><circle cx="312.4" cy="99.0" r="1.0" fill="#ffffff" opacity="0.43"/><circle cx="82.1" cy="437.4" r="0.6" fill="#e0a0e0" opacity="0.63"/><circle cx="148.6" cy="134.1" r="1.3" fill="#ff80d0" opacity="0.46"/><circle cx="358.9" cy="73.5" r="0.6" fill="#ff80d0" opacity="0.36"/><circle cx="354.3" cy="101.5" r="1.0" fill="#ffd0f0" opacity="0.50"/><circle cx="259" cy="36" r="3" fill="#ff80d0" opacity="0.25"/><circle cx="259" cy="36" r="1.5" fill="#ffe8f8"/><circle cx="249" cy="92" r="3" fill="#ff80d0" opacity="0.25"/><circle cx="249" cy="92" r="1.5" fill="#ffe8f8"/><circle cx="274" cy="103" r="3" fill="#ff80d0" opacity="0.25"/><circle cx="274" cy="103" r="1.5" fill="#ffe8f8"/><circle cx="348" cy="160" r="3" fill="#ff80d0" opacity="0.25"/><circle cx="348" cy="160" r="1.5" fill="#ffe8f8"/><circle cx="242" cy="159" r="3" fill="#ff80d0" opacity="0.25"/><circle cx="242" cy="159" r="1.5" fill="#ffe8f8"/><circle cx="171" cy="136" r="3" fill="#ff80d0" opacity="0.25"/><circle cx="171" cy="136" r="1.5" fill="#ffe8f8"/><circle cx="109" cy="273" r="3" fill="#ff80d0" opacity="0.25"/><circle cx="109" cy="273" r="1.5" fill="#ffe8f8"/><circle cx="142" cy="253" r="3" fill="#ff80d0" opacity="0.25"/><circle cx="142" cy="253" r="1.5" fill="#ffe8f8"/><circle cx="171" cy="297" r="3" fill="#ff80d0" opacity="0.25"/><circle cx="171" cy="297" r="1.5" fill="#ffe8f8"/><circle cx="266" cy="297" r="3" fill="#ff80d0" opacity="0.25"/><circle cx="266" cy="297" r="1.5" fill="#ffe8f8"/><circle cx="326" cy="76" r="3" fill="#ff80d0" opacity="0.25"/><circle cx="326" cy="76" r="1.5" fill="#ffe8f8"/><circle cx="15" cy="389" r="3" fill="#ff80d0" opacity="0.25"/><circle cx="15" cy="389" r="1.5" fill="#ffe8f8"/><circle cx="3" cy="509" r="3" fill="#ff80d0" opacity="0.25"/><circle cx="3" cy="509" r="1.5" fill="#ffe8f8"/><circle cx="35" cy="453" r="3" fill="#ff80d0" opacity="0.25"/><circle cx="35" cy="453" r="1.5" fill="#ffe8f8"/><circle cx="99" cy="586" r="3" fill="#ff80d0" opacity="0.25"/><circle cx="99" cy="586" r="1.5" fill="#ffe8f8"/><circle cx="60" cy="520" r="3" fill="#ff80d0" opacity="0.25"/><circle cx="60" cy="520" r="1.5" fill="#ffe8f8"/><circle cx="120" cy="640" r="3" fill="#ff80d0" opacity="0.25"/><circle cx="120" cy="640" r="1.5" fill="#ffe8f8"/><path d="M95.7 -2 L270 -2 L257 22 Q253 26.5 248 27.5 Q243 28.5 240 33 L232 44.5 L133.8 44.5 L126 33 Q123 28.5 118 27.5 Q113 26.5 109 22 Z" fill="none" stroke="#c0106a" stroke-width="12" stroke-linejoin="round" opacity="0.75" style="filter:blur(3px)"/><path d="M95.7 -2 L270 -2 L257 22 Q253 26.5 248 27.5 Q243 28.5 240 33 L232 44.5 L133.8 44.5 L126 33 Q123 28.5 118 27.5 Q113 26.5 109 22 Z" fill="url(#phudtop)" stroke="#8a8a8a" stroke-width="2.2"/><path d="M95.7 -2 L270 -2 L257 22 Q253 26.5 248 27.5 Q243 28.5 240 33 L232 44.5 L133.8 44.5 L126 33 Q123 28.5 118 27.5 Q113 26.5 109 22 Z" fill="none" stroke="#f0f0f0" stroke-width="0.8" transform="translate(0,-0.6)" opacity="0.6"/><g transform="translate(182,3) scale(1.0)">
<ellipse cx="0" cy="30" rx="4.5" ry="17" fill="url(#pbtail)"/>
<circle cx="0" cy="13" r="15" fill="url(#pbglow)"/>
<path d="M0 -2 L4.5 6 L10 11 L6.5 14 L8.5 21 L3 18.5 L0 23 L-3 18.5 L-8.5 21 L-6.5 14 L-10 11 L-4.5 6 Z" fill="#ffd8c0" style="filter:blur(0.8px)"/>
<path d="M0 1 L3 7 L6 10.5 L4 13 L5 17 L1.5 15.5 L0 19 L-1.5 15.5 L-5 17 L-4 13 L-6 10.5 L-3 7 Z" fill="#fffaf6"/>
</g><g>
<circle cx="269.5" cy="136" r="27.9" fill="none" stroke="#e0187a" stroke-width="5" opacity="0.65" style="filter:blur(1.6px)"/>
<circle cx="269.5" cy="136" r="27.2" fill="#c8186a"/>
<circle cx="269.5" cy="136" r="25.7" fill="#161616"/>
<circle cx="269.5" cy="136" r="23.9" fill="url(#prock)"/>
<circle cx="250.996" cy="133.944" r="2.5700000000000003" fill="#4a4a4a"/>
<circle cx="257.935" cy="134.715" r="3.341" fill="#5e5e5e"/>
<circle cx="282.35" cy="142.425" r="4.369" fill="#5a5a5a"/>
<circle cx="273.355" cy="150.135" r="2.5700000000000003" fill="#555"/>
<circle cx="268.215" cy="145.766" r="2.056" fill="#555"/>
<circle cx="263.075" cy="115.95400000000001" r="2.056" fill="#2a2a2a"/>
<circle cx="268.215" cy="114.926" r="1.2850000000000001" fill="#2a2a2a"/>
<circle cx="286.205" cy="127.005" r="2.827" fill="#6a6a6a"/>
</g><g>
<circle cx="335" cy="257.7" r="27.9" fill="none" stroke="#e0187a" stroke-width="5" opacity="0.65" style="filter:blur(1.6px)"/>
<circle cx="335" cy="257.7" r="27.2" fill="#c8186a"/>
<circle cx="335" cy="257.7" r="25.7" fill="#161616"/>
<circle cx="335" cy="257.7" r="23.9" fill="url(#prock)"/>
<circle cx="316.496" cy="255.64399999999998" r="2.5700000000000003" fill="#4a4a4a"/>
<circle cx="323.435" cy="256.41499999999996" r="3.341" fill="#5e5e5e"/>
<circle cx="347.85" cy="264.125" r="4.369" fill="#5a5a5a"/>
<circle cx="338.855" cy="271.835" r="2.5700000000000003" fill="#555"/>
<circle cx="333.715" cy="267.466" r="2.056" fill="#555"/>
<circle cx="328.575" cy="237.654" r="2.056" fill="#2a2a2a"/>
<circle cx="333.715" cy="236.62599999999998" r="1.2850000000000001" fill="#2a2a2a"/>
<circle cx="351.705" cy="248.70499999999998" r="2.827" fill="#6a6a6a"/>
</g><g>
<circle cx="113.5" cy="378.7" r="27.4" fill="none" stroke="#e0187a" stroke-width="5" opacity="0.65" style="filter:blur(1.6px)"/>
<circle cx="113.5" cy="378.7" r="26.7" fill="#c8186a"/>
<circle cx="113.5" cy="378.7" r="25.2" fill="#161616"/>
<circle cx="113.5" cy="378.7" r="23.4" fill="url(#prock)"/>
<circle cx="95.356" cy="376.68399999999997" r="2.52" fill="#4a4a4a"/>
<circle cx="102.16" cy="377.44" r="3.276" fill="#5e5e5e"/>
<circle cx="126.1" cy="385.0" r="4.284" fill="#5a5a5a"/>
<circle cx="117.28" cy="392.56" r="2.52" fill="#555"/>
<circle cx="112.24" cy="388.276" r="2.016" fill="#555"/>
<circle cx="107.2" cy="359.044" r="2.016" fill="#2a2a2a"/>
<circle cx="112.24" cy="358.036" r="1.26" fill="#2a2a2a"/>
<circle cx="129.88" cy="369.88" r="2.772" fill="#6a6a6a"/>
</g><g>
<circle cx="82" cy="500.4" r="27.4" fill="none" stroke="#e0187a" stroke-width="5" opacity="0.65" style="filter:blur(1.6px)"/>
<circle cx="82" cy="500.4" r="26.7" fill="#c8186a"/>
<circle cx="82" cy="500.4" r="25.2" fill="#161616"/>
<circle cx="82" cy="500.4" r="23.4" fill="url(#prock)"/>
<circle cx="63.856" cy="498.38399999999996" r="2.52" fill="#4a4a4a"/>
<circle cx="70.66" cy="499.14" r="3.276" fill="#5e5e5e"/>
<circle cx="94.6" cy="506.7" r="4.284" fill="#5a5a5a"/>
<circle cx="85.78" cy="514.26" r="2.52" fill="#555"/>
<circle cx="80.74" cy="509.976" r="2.016" fill="#555"/>
<circle cx="75.7" cy="480.74399999999997" r="2.016" fill="#2a2a2a"/>
<circle cx="80.74" cy="479.736" r="1.26" fill="#2a2a2a"/>
<circle cx="98.38" cy="491.58" r="2.772" fill="#6a6a6a"/>
</g><g transform="translate(190,202) scale(1.0)">
<ellipse cx="0" cy="30" rx="4.5" ry="17" fill="url(#pbtail)"/>
<circle cx="0" cy="13" r="15" fill="url(#pbglow)"/>
<path d="M0 -2 L4.5 6 L10 11 L6.5 14 L8.5 21 L3 18.5 L0 23 L-3 18.5 L-8.5 21 L-6.5 14 L-10 11 L-4.5 6 Z" fill="#ffd8c0" style="filter:blur(0.8px)"/>
<path d="M0 1 L3 7 L6 10.5 L4 13 L5 17 L1.5 15.5 L0 19 L-1.5 15.5 L-5 17 L-4 13 L-6 10.5 L-3 7 Z" fill="#fffaf6"/>
</g><g transform="translate(153,411) scale(0.95)">
<ellipse cx="0" cy="30" rx="4.5" ry="17" fill="url(#pbtail)"/>
<circle cx="0" cy="13" r="15" fill="url(#pbglow)"/>
<path d="M0 -2 L4.5 6 L10 11 L6.5 14 L8.5 21 L3 18.5 L0 23 L-3 18.5 L-8.5 21 L-6.5 14 L-10 11 L-4.5 6 Z" fill="#ffd8c0" style="filter:blur(0.8px)"/>
<path d="M0 1 L3 7 L6 10.5 L4 13 L5 17 L1.5 15.5 L0 19 L-1.5 15.5 L-5 17 L-4 13 L-6 10.5 L-3 7 Z" fill="#fffaf6"/>
</g><g transform="translate(183.5,591) scale(1.0)">
<ellipse cx="0" cy="-15" rx="72" ry="80" fill="url(#pshipglow)"/>
<g fill="#e8207a" opacity="0.6" style="filter:blur(2.5px)">
<path d="M-30 -80 Q-40 -62 -34 -42 L-40 -38 L-62 -24 L-62 -11 L-40 -10 L-36 30 L-20 10 L-8 30 L0 55 L8 30 L20 10 L36 30 L40 -10 L62 -11 L62 -24 L40 -38 L34 -42 Q40 -62 30 -80 L16 -44 L0 -36 L-16 -44 Z"/>
</g>
<g style="filter:blur(1.2px)">
<path d="M-38 -10 Q-40 12 -38 42 Q-33 12 -34 -10Z M38 -10 Q40 12 38 42 Q33 12 34 -10Z" fill="#ff70c0" opacity="0.7"/>
<path d="M-6 10 Q-3 35 0 58 Q3 35 6 10Z" fill="#ff70c0" opacity="0.75"/>
<path d="M-22 0 Q-24 20 -22 35 Q-19 20 -18 0Z M22 0 Q24 20 22 35 Q19 20 18 0Z" fill="#ff50a8" opacity="0.6"/>
</g>
<path d="M-29.5 -77.3 Q-37 -66 -31.5 -44 L-19.7 -44 Q-15 -62 -29.5 -77.3 Z" fill="#a82a26"/>
<path d="M29.5 -77.3 Q37 -66 31.5 -44 L19.7 -44 Q15 -62 29.5 -77.3 Z" fill="#a82a26"/>
<rect x="-28.5" y="-49" width="8" height="9" fill="#f0b030"/>
<rect x="20.5" y="-49" width="8" height="9" fill="#f0b030"/>
<path d="M-58.8 -21.6 L-37.3 -30.4 L-35.3 -13.8 L-58.8 -13.8 Z" fill="#f8ece8"/>
<path d="M58.8 -21.6 L37.3 -30.4 L35.3 -13.8 L58.8 -13.8 Z" fill="#f8ece8"/>
<path d="M-38.3 -38 L-15.8 -41 L-13 -24 L-18.7 8.6 L-35.5 -9 Z" fill="#a82426"/>
<path d="M38.3 -38 L15.8 -41 L13 -24 L18.7 8.6 L35.5 -9 Z" fill="#a82426"/>
<path d="M-11 -41 L0 -32.4 L11.5 -41 L16.7 -30 L14.8 3 Q8 10.6 0 10.6 Q-8 10.6 -14.8 3 L-16.7 -30 Z" fill="#3e2e2c"/>
<path d="M-17 -31 L-10 -28 L-9.5 -6 L-16 -4 Z M17 -31 L10 -28 L9.5 -6 L16 -4 Z" fill="#f0c050"/>
<ellipse cx="-37.3" cy="-4" rx="5" ry="9" fill="url(#ppinkglow)"/>
<ellipse cx="37.3" cy="-4" rx="5" ry="9" fill="url(#ppinkglow)"/>
<ellipse cx="0" cy="22" rx="6" ry="11" fill="url(#ppinkglow)"/>
<path d="M-26 0 H26" stroke="#ff9040" stroke-width="1.2" opacity="0.8"/>
<circle cx="0" cy="0" r="13" fill="url(#pcoreglow)"/>
</g></svg>
</body></html>
